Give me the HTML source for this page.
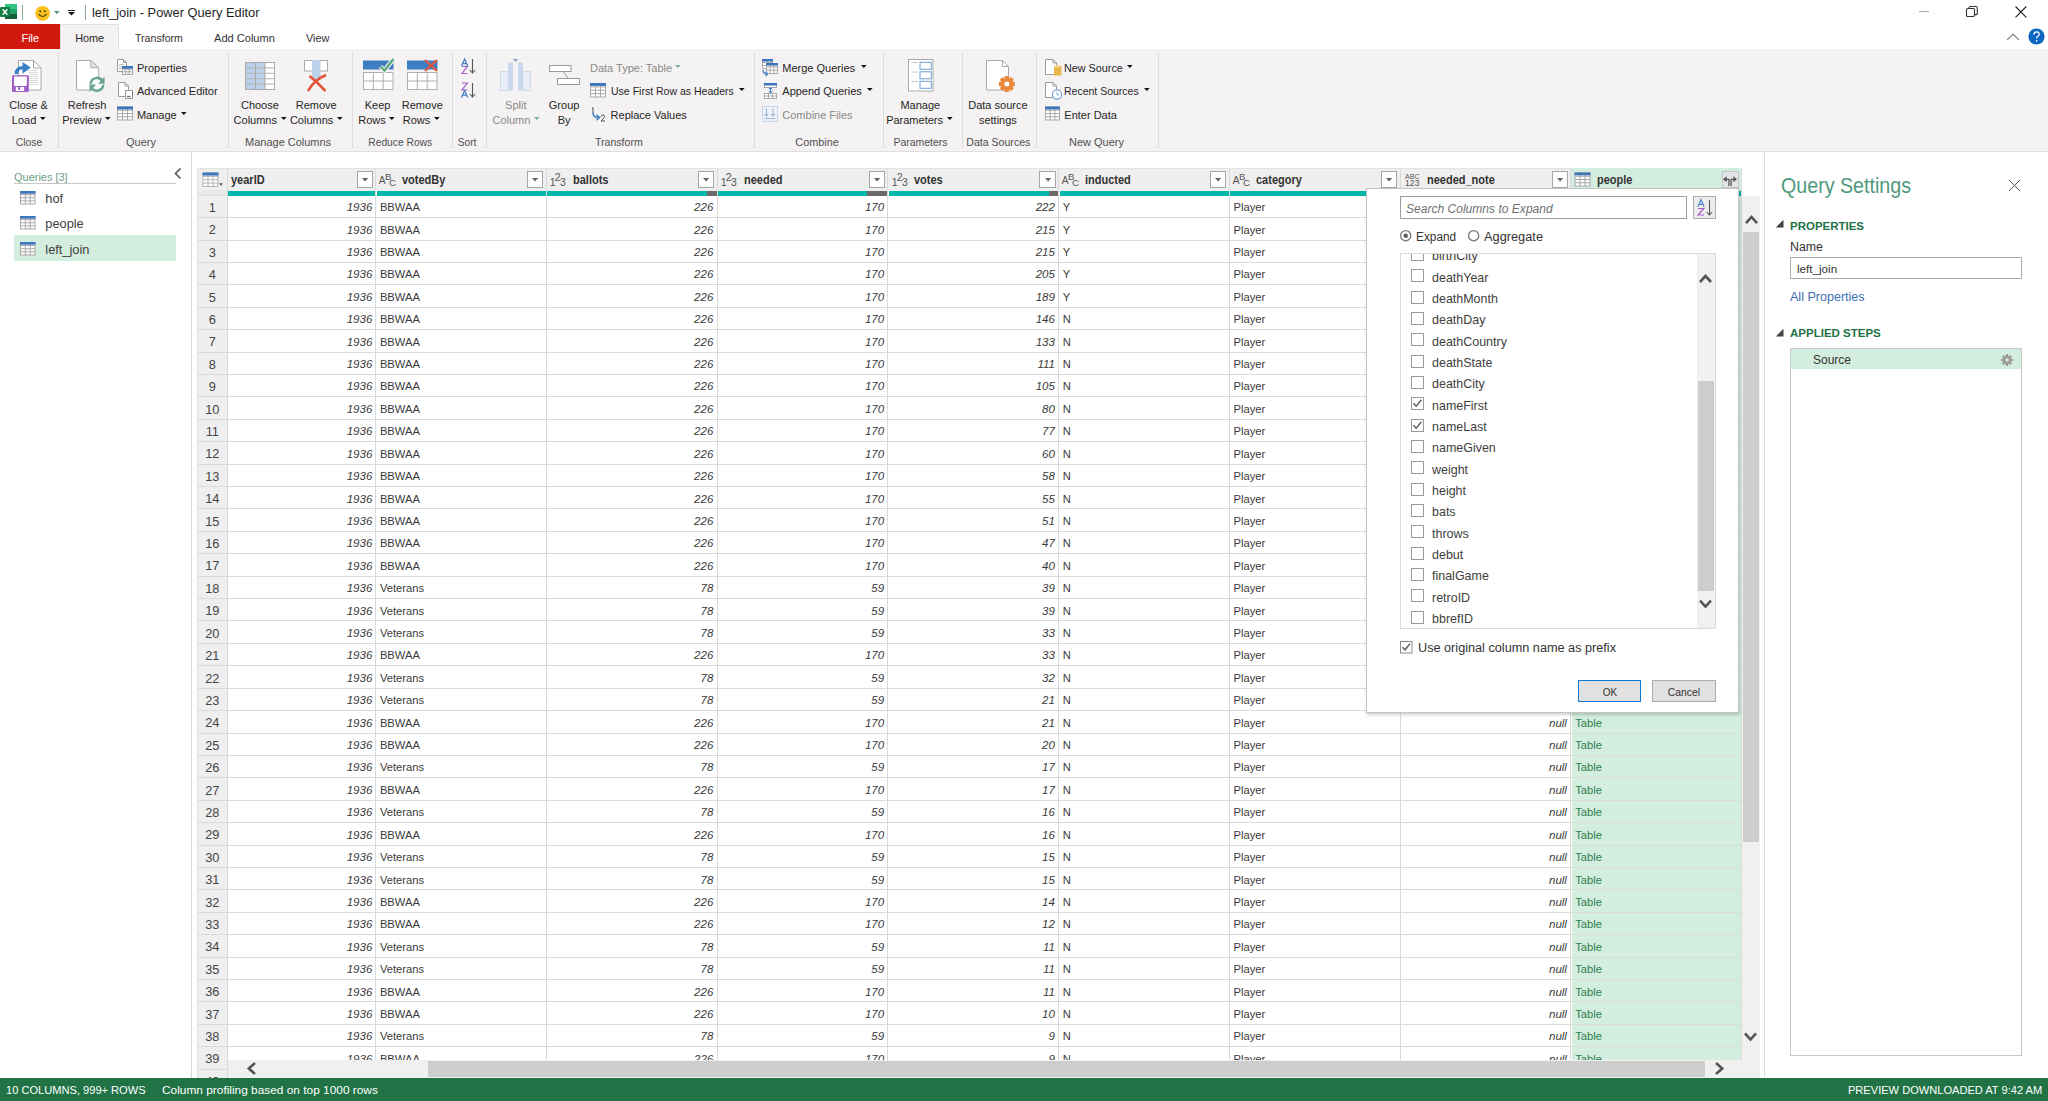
<!DOCTYPE html>
<html><head><meta charset="utf-8"><title>left_join - Power Query Editor</title>
<style>
html,body{margin:0;padding:0;}
body{width:2048px;height:1101px;position:relative;overflow:hidden;background:#fff;font-family:"Liberation Sans",sans-serif;}
.a{position:absolute;display:block;}
.t{position:absolute;white-space:nowrap;display:block;}
svg.a{overflow:visible;}
</style></head><body>
<div class="a" style="left:0.00px;top:0.00px;width:2048.00px;height:24.00px;background:#ffffff;"></div>
<svg class="a" style="left:0.00px;top:3.00px;" width="18" height="17" viewBox="0 0 18 17"><rect x="5" y="1" width="12" height="15" rx="1" fill="#21a366"/><rect x="5" y="1" width="12" height="5" fill="#33c481"/><rect x="5" y="11" width="12" height="5" fill="#185c37"/><rect x="0" y="4" width="10" height="10" rx="1" fill="#107c41"/><path d="M2.6 6.2 L7.4 11.8 M7.4 6.2 L2.6 11.8" stroke="#fff" stroke-width="1.4"/></svg>
<div class="a" style="left:22.00px;top:5.00px;width:1.00px;height:15.00px;background:#8fa89b;"></div>
<svg class="a" style="left:35.00px;top:5.00px;" width="16" height="16" viewBox="0 0 16 16"><circle cx="7.6" cy="8.3" r="7.4" fill="#f9c21b"/><circle cx="5.2" cy="6.3" r="1" fill="#4a3d10"/><circle cx="9.9" cy="6.3" r="1" fill="#4a3d10"/><path d="M3.4 9.2 Q7.6 13.8 11.8 9.2" stroke="#4a3d10" stroke-width="1.1" fill="none"/></svg>
<svg class="a" style="left:53.80px;top:11.30px;" width="5.6" height="3.2" viewBox="0 0 5.6 3.2"><path d="M0 0H5.6 L2.8 3.2 Z" fill="#5d8d76"/></svg>
<div class="a" style="left:67.50px;top:10.00px;width:7.00px;height:1.20px;background:#222;"></div>
<svg class="a" style="left:67.50px;top:12.20px;" width="7" height="3.6" viewBox="0 0 7 3.6"><path d="M0 0H7 L3.5 3.6 Z" fill="#111"/></svg>
<div class="a" style="left:85.00px;top:5.00px;width:1.00px;height:15.00px;background:#8fa89b;"></div>
<span class="t" style="left:91.60px;top:6.00px;font-size:13.00px;line-height:13.00px;color:#1f1f1f;transform:scaleX(0.9865);transform-origin:left center;">left_join - Power Query Editor</span>
<div class="a" style="left:1918.50px;top:11.00px;width:10.50px;height:1.00px;background:#a8a8a8;"></div>
<svg class="a" style="left:1965.00px;top:5.00px;" width="14" height="14" viewBox="0 0 14 14"><rect x="1.5" y="3.5" width="8" height="8" rx="1.2" fill="none" stroke="#333" stroke-width="1.1"/><path d="M4 3.5 V2.6 Q4 1.5 5.2 1.5 H11 Q12.3 1.5 12.3 2.8 V8.6 Q12.3 9.6 11.3 9.6 H9.5" fill="none" stroke="#333" stroke-width="1.1"/></svg>
<svg class="a" style="left:2014.00px;top:5.00px;" width="14" height="14" viewBox="0 0 14 14"><path d="M1.5 1.5 L12.3 12.3 M12.3 1.5 L1.5 12.3" stroke="#222" stroke-width="1.1"/></svg>
<div class="a" style="left:0.00px;top:24.00px;width:2048.00px;height:25.00px;background:#ffffff;"></div>
<div class="a" style="left:0.00px;top:24.00px;width:60.00px;height:24.50px;background:#d2190f;"></div>
<span class="t" style="left:21.44px;top:32.69px;font-size:11.00px;line-height:11.00px;color:#ffffff;">File</span>
<div class="a" style="left:60.00px;top:24.00px;width:58.50px;height:26.00px;background:#f4f2f2;border:1px solid #e1dfdd;border-bottom:none;box-sizing:border-box;"></div>
<span class="t" style="left:74.63px;top:32.69px;font-size:11.00px;line-height:11.00px;color:#262626;transform:scaleX(0.9883);transform-origin:center center;">Home</span>
<span class="t" style="left:135.30px;top:32.69px;font-size:11.00px;line-height:11.00px;color:#333;transform:scaleX(0.9636);transform-origin:left center;">Transform</span>
<span class="t" style="left:214.20px;top:32.69px;font-size:11.00px;line-height:11.00px;color:#333;transform:scaleX(1.0060);transform-origin:left center;">Add Column</span>
<span class="t" style="left:305.60px;top:32.69px;font-size:11.00px;line-height:11.00px;color:#333;transform:scaleX(0.9939);transform-origin:left center;">View</span>
<svg class="a" style="left:2006.00px;top:33.00px;" width="14" height="8" viewBox="0 0 14 8"><path d="M1 7 L7 1.2 L13 7" fill="none" stroke="#8a8a8a" stroke-width="1.2"/></svg>
<svg class="a" style="left:2027.60px;top:28.20px;" width="17" height="17" viewBox="0 0 17 17"><circle cx="8.5" cy="8.5" r="8.1" fill="#0f67c4"/><path d="M6 6.4 Q6 3.8 8.6 3.8 Q11.2 3.8 11.2 6.2 Q11.2 7.6 9.6 8.5 Q8.6 9.1 8.6 10.6" fill="none" stroke="#fff" stroke-width="1.3"/><rect x="7.9" y="12" width="1.4" height="1.5" fill="#fff"/></svg>
<div class="a" style="left:0.00px;top:49.00px;width:2048.00px;height:103.00px;background:#f4f2f2;"></div>
<div class="a" style="left:0.00px;top:151.00px;width:2048.00px;height:1.00px;background:#e1dfdd;"></div>
<div class="a" style="left:58.30px;top:53.00px;width:1.00px;height:95.00px;background:#dedcdb;"></div>
<div class="a" style="left:228.20px;top:53.00px;width:1.00px;height:95.00px;background:#dedcdb;"></div>
<div class="a" style="left:351.80px;top:53.00px;width:1.00px;height:95.00px;background:#dedcdb;"></div>
<div class="a" style="left:452.40px;top:53.00px;width:1.00px;height:95.00px;background:#dedcdb;"></div>
<div class="a" style="left:486.30px;top:53.00px;width:1.00px;height:95.00px;background:#dedcdb;"></div>
<div class="a" style="left:754.30px;top:53.00px;width:1.00px;height:95.00px;background:#dedcdb;"></div>
<div class="a" style="left:883.30px;top:53.00px;width:1.00px;height:95.00px;background:#dedcdb;"></div>
<div class="a" style="left:962.30px;top:53.00px;width:1.00px;height:95.00px;background:#dedcdb;"></div>
<div class="a" style="left:1036.30px;top:53.00px;width:1.00px;height:95.00px;background:#dedcdb;"></div>
<div class="a" style="left:1158.30px;top:53.00px;width:1.00px;height:95.00px;background:#dedcdb;"></div>
<span class="t" style="left:14.54px;top:136.69px;font-size:11.00px;line-height:11.00px;color:#505050;transform:scaleX(0.9387);transform-origin:center center;">Close</span>
<span class="t" style="left:126.32px;top:136.69px;font-size:11.00px;line-height:11.00px;color:#505050;transform:scaleX(0.9948);transform-origin:center center;">Query</span>
<span class="t" style="left:244.89px;top:136.69px;font-size:11.00px;line-height:11.00px;color:#505050;transform:scaleX(0.9975);transform-origin:center center;">Manage Columns</span>
<span class="t" style="left:366.36px;top:136.69px;font-size:11.00px;line-height:11.00px;color:#505050;transform:scaleX(0.9346);transform-origin:center center;">Reduce Rows</span>
<span class="t" style="left:457.21px;top:136.69px;font-size:11.00px;line-height:11.00px;color:#505050;transform:scaleX(0.9269);transform-origin:center center;">Sort</span>
<span class="t" style="left:594.04px;top:136.69px;font-size:11.00px;line-height:11.00px;color:#505050;transform:scaleX(0.9636);transform-origin:center center;">Transform</span>
<span class="t" style="left:795.49px;top:136.69px;font-size:11.00px;line-height:11.00px;color:#505050;transform:scaleX(0.9836);transform-origin:center center;">Combine</span>
<span class="t" style="left:892.37px;top:136.69px;font-size:11.00px;line-height:11.00px;color:#505050;transform:scaleX(0.9498);transform-origin:center center;">Parameters</span>
<span class="t" style="left:964.68px;top:136.69px;font-size:11.00px;line-height:11.00px;color:#505050;transform:scaleX(0.9603);transform-origin:center center;">Data Sources</span>
<span class="t" style="left:1068.69px;top:136.69px;font-size:11.00px;line-height:11.00px;color:#505050;transform:scaleX(0.9997);transform-origin:center center;">New Query</span>
<span class="t" style="left:9.34px;top:99.69px;font-size:11.00px;line-height:11.00px;color:#262626;">Close &amp;</span>
<span class="t" style="left:11.83px;top:114.69px;font-size:11.00px;line-height:11.00px;color:#262626;">Load</span>
<svg class="a" style="left:39.90px;top:117.30px;" width="5.6" height="3.0" viewBox="0 0 5.6 3.0"><path d="M0 0H5.6 L2.8 3.0 Z" fill="#111"/></svg>
<span class="t" style="left:67.74px;top:99.69px;font-size:11.00px;line-height:11.00px;color:#262626;">Refresh</span>
<span class="t" style="left:62.28px;top:114.69px;font-size:11.00px;line-height:11.00px;color:#262626;">Preview</span>
<svg class="a" style="left:105.00px;top:117.30px;" width="5.6" height="3.0" viewBox="0 0 5.6 3.0"><path d="M0 0H5.6 L2.8 3.0 Z" fill="#111"/></svg>
<span class="t" style="left:240.94px;top:99.69px;font-size:11.00px;line-height:11.00px;color:#262626;">Choose</span>
<span class="t" style="left:233.59px;top:114.69px;font-size:11.00px;line-height:11.00px;color:#262626;">Columns</span>
<svg class="a" style="left:280.60px;top:117.30px;" width="5.6" height="3.0" viewBox="0 0 5.6 3.0"><path d="M0 0H5.6 L2.8 3.0 Z" fill="#111"/></svg>
<span class="t" style="left:295.72px;top:99.69px;font-size:11.00px;line-height:11.00px;color:#262626;">Remove</span>
<span class="t" style="left:289.89px;top:114.69px;font-size:11.00px;line-height:11.00px;color:#262626;">Columns</span>
<svg class="a" style="left:336.90px;top:117.30px;" width="5.6" height="3.0" viewBox="0 0 5.6 3.0"><path d="M0 0H5.6 L2.8 3.0 Z" fill="#111"/></svg>
<span class="t" style="left:364.75px;top:99.69px;font-size:11.00px;line-height:11.00px;color:#262626;">Keep</span>
<span class="t" style="left:358.19px;top:114.69px;font-size:11.00px;line-height:11.00px;color:#262626;">Rows</span>
<svg class="a" style="left:389.30px;top:117.30px;" width="5.6" height="3.0" viewBox="0 0 5.6 3.0"><path d="M0 0H5.6 L2.8 3.0 Z" fill="#111"/></svg>
<span class="t" style="left:401.82px;top:99.69px;font-size:11.00px;line-height:11.00px;color:#262626;">Remove</span>
<span class="t" style="left:402.79px;top:114.69px;font-size:11.00px;line-height:11.00px;color:#262626;">Rows</span>
<svg class="a" style="left:433.90px;top:117.30px;" width="5.6" height="3.0" viewBox="0 0 5.6 3.0"><path d="M0 0H5.6 L2.8 3.0 Z" fill="#111"/></svg>
<span class="t" style="left:505.10px;top:99.69px;font-size:11.00px;line-height:11.00px;color:#8a8a8a;">Split</span>
<span class="t" style="left:492.49px;top:114.69px;font-size:11.00px;line-height:11.00px;color:#8a8a8a;">Column</span>
<svg class="a" style="left:534.00px;top:117.30px;" width="5.6" height="3.0" viewBox="0 0 5.6 3.0"><path d="M0 0H5.6 L2.8 3.0 Z" fill="#6fb592"/></svg>
<span class="t" style="left:548.81px;top:99.69px;font-size:11.00px;line-height:11.00px;color:#262626;">Group</span>
<span class="t" style="left:557.68px;top:114.69px;font-size:11.00px;line-height:11.00px;color:#262626;">By</span>
<span class="t" style="left:900.42px;top:99.69px;font-size:11.00px;line-height:11.00px;color:#262626;">Manage</span>
<span class="t" style="left:886.14px;top:114.69px;font-size:11.00px;line-height:11.00px;color:#262626;">Parameters</span>
<svg class="a" style="left:946.60px;top:117.30px;" width="5.6" height="3.0" viewBox="0 0 5.6 3.0"><path d="M0 0H5.6 L2.8 3.0 Z" fill="#111"/></svg>
<span class="t" style="left:968.25px;top:99.69px;font-size:11.00px;line-height:11.00px;color:#262626;">Data source</span>
<span class="t" style="left:978.95px;top:114.69px;font-size:11.00px;line-height:11.00px;color:#262626;">settings</span>
<span class="t" style="left:136.90px;top:62.69px;font-size:11.00px;line-height:11.00px;color:#262626;">Properties</span>
<span class="t" style="left:136.90px;top:85.69px;font-size:11.00px;line-height:11.00px;color:#262626;">Advanced Editor</span>
<span class="t" style="left:136.90px;top:109.69px;font-size:11.00px;line-height:11.00px;color:#262626;">Manage</span>
<svg class="a" style="left:181.00px;top:111.60px;" width="5.6" height="3.0" viewBox="0 0 5.6 3.0"><path d="M0 0H5.6 L2.8 3.0 Z" fill="#111"/></svg>
<span class="t" style="left:590.00px;top:62.69px;font-size:11.00px;line-height:11.00px;color:#8a8a8a;">Data Type: Table</span>
<svg class="a" style="left:675.00px;top:64.70px;" width="5.6" height="3.0" viewBox="0 0 5.6 3.0"><path d="M0 0H5.6 L2.8 3.0 Z" fill="#6fb592"/></svg>
<span class="t" style="left:610.60px;top:85.69px;font-size:11.00px;line-height:11.00px;color:#262626;transform:scaleX(0.9566);transform-origin:left center;">Use First Row as Headers</span>
<svg class="a" style="left:739.00px;top:87.80px;" width="5.6" height="3.0" viewBox="0 0 5.6 3.0"><path d="M0 0H5.6 L2.8 3.0 Z" fill="#111"/></svg>
<span class="t" style="left:610.60px;top:109.69px;font-size:11.00px;line-height:11.00px;color:#262626;">Replace Values</span>
<span class="t" style="left:782.30px;top:62.69px;font-size:11.00px;line-height:11.00px;color:#262626;">Merge Queries</span>
<svg class="a" style="left:860.50px;top:64.70px;" width="5.6" height="3.0" viewBox="0 0 5.6 3.0"><path d="M0 0H5.6 L2.8 3.0 Z" fill="#111"/></svg>
<span class="t" style="left:782.30px;top:85.69px;font-size:11.00px;line-height:11.00px;color:#262626;">Append Queries</span>
<svg class="a" style="left:867.20px;top:87.80px;" width="5.6" height="3.0" viewBox="0 0 5.6 3.0"><path d="M0 0H5.6 L2.8 3.0 Z" fill="#111"/></svg>
<span class="t" style="left:782.30px;top:109.69px;font-size:11.00px;line-height:11.00px;color:#8a8a8a;">Combine Files</span>
<span class="t" style="left:1064.30px;top:62.69px;font-size:11.00px;line-height:11.00px;color:#262626;transform:scaleX(0.9814);transform-origin:left center;">New Source</span>
<svg class="a" style="left:1127.00px;top:64.70px;" width="5.6" height="3.0" viewBox="0 0 5.6 3.0"><path d="M0 0H5.6 L2.8 3.0 Z" fill="#111"/></svg>
<span class="t" style="left:1064.30px;top:85.69px;font-size:11.00px;line-height:11.00px;color:#262626;transform:scaleX(0.9545);transform-origin:left center;">Recent Sources</span>
<svg class="a" style="left:1143.50px;top:87.80px;" width="5.6" height="3.0" viewBox="0 0 5.6 3.0"><path d="M0 0H5.6 L2.8 3.0 Z" fill="#111"/></svg>
<span class="t" style="left:1064.30px;top:109.69px;font-size:11.00px;line-height:11.00px;color:#262626;">Enter Data</span>
<svg class="a" style="left:11.00px;top:58.00px;" width="32" height="36" viewBox="0 0 32 36"><path d="M7.5 2.5 H22.5 L30.0 10.0 V32.0 H7.5 Z" fill="#fff" stroke="#a8a8a8" stroke-width="1"/><path d="M22.5 2.5 V10.0 H30.0" fill="none" stroke="#a8a8a8" stroke-width="1"/><path d="M17.5 12.5 H27" stroke="#dadada" stroke-width="1"/><path d="M17.5 14.5 H27" stroke="#dadada" stroke-width="1"/><path d="M17.5 16.5 H27" stroke="#dadada" stroke-width="1"/><path d="M17.5 18.5 H27" stroke="#dadada" stroke-width="1"/><path d="M17.5 20.5 H27" stroke="#dadada" stroke-width="1"/><path d="M17.5 22.5 H27" stroke="#dadada" stroke-width="1"/><path d="M17.5 24.5 H27" stroke="#dadada" stroke-width="1"/><path d="M17.5 26.5 H27" stroke="#dadada" stroke-width="1"/><path d="M5.3 16 Q5.3 9.6 12.5 9.6" fill="none" stroke="#3b7fc4" stroke-width="3.4"/><path d="M11.5 4 L19.8 9.6 L11.5 15.7 Z" fill="#3b7fc4"/><rect x="1" y="17.2" width="16.8" height="16.8" rx="1.2" fill="#9b5ec6"/><rect x="3" y="18.4" width="12.8" height="9.6" rx="0.8" fill="#fff"/><rect x="4.8" y="29" width="8.4" height="4" fill="#fff"/><rect x="7.2" y="29" width="2" height="3" fill="#9b5ec6"/></svg>
<svg class="a" style="left:74.00px;top:58.00px;" width="32" height="36" viewBox="0 0 32 36"><path d="M2.5 2.5 H16.7 L24.7 10 V32 H2.5 Z" fill="#fff" stroke="#a8a8a8" stroke-width="1"/><path d="M16.7 2.5 V9.7 H24.7 Z" fill="#e4e4e4" stroke="#b0b0b0" stroke-width="1"/><circle cx="23" cy="26.2" r="7.6" fill="#fff"/><path d="M16.8 26.2 A6.2 6.2 0 0 1 28.4 23.1" fill="none" stroke="#6aa78e" stroke-width="2.5"/><path d="M30.6 18.5 V25.8 H24 Z" fill="#6aa78e"/><path d="M29.2 26.6 A6.2 6.2 0 0 1 17.6 29.5" fill="none" stroke="#6aa78e" stroke-width="2.5"/><path d="M15.5 34 V26.6 H22.2 Z" fill="#6aa78e"/></svg>
<svg class="a" style="left:116.00px;top:58.00px;" width="18" height="18" viewBox="0 0 18 18"><path d="M1.5 1.5 H7.5 L10.5 4.5 V13.5 H1.5 Z" fill="#fff" stroke="#9a9a9a" stroke-width="1"/><path d="M7.5 1.5 V4.5 H10.5" fill="none" stroke="#9a9a9a" stroke-width="1"/><path d="M3 6.5 H8" stroke="#bbb"/><path d="M3 8.5 H8" stroke="#bbb"/><path d="M3 10.5 H8" stroke="#bbb"/><rect x="6.5" y="8.5" width="10" height="8" fill="#fff" stroke="#a9a9a9" stroke-width="1"/><path d="M9.83 8.5 V16.5" stroke="#a9a9a9" stroke-width="1"/><path d="M13.17 8.5 V16.5" stroke="#a9a9a9" stroke-width="1"/><path d="M6.5 11.17 H16.5" stroke="#a9a9a9" stroke-width="1"/><path d="M6.5 13.83 H16.5" stroke="#a9a9a9" stroke-width="1"/><rect x="6.0" y="8.0" width="11" height="2.7" fill="#3d76bd"/></svg>
<svg class="a" style="left:117.00px;top:81.00px;" width="18" height="19" viewBox="0 0 18 19"><path d="M1.5 1.5 H8.0 L11.5 5.0 V15.5 H1.5 Z" fill="#fff" stroke="#9a9a9a" stroke-width="1"/><path d="M8.0 1.5 V5.0 H11.5" fill="none" stroke="#9a9a9a" stroke-width="1"/><rect x="8.5" y="9.5" width="7" height="8" fill="#fff" stroke="#9a9a9a"/><path d="M10 15.5 H13.5" stroke="#666" stroke-width="1.2"/><path d="M15.5 11 V14" stroke="#666"/></svg>
<svg class="a" style="left:116.00px;top:105.00px;" width="18" height="17" viewBox="0 0 18 17"><rect x="1.5" y="2" width="15" height="13" fill="#fff" stroke="#a9a9a9" stroke-width="1"/><path d="M6.50 2 V15" stroke="#a9a9a9" stroke-width="1"/><path d="M11.50 2 V15" stroke="#a9a9a9" stroke-width="1"/><path d="M1.5 5.25 H16.5" stroke="#a9a9a9" stroke-width="1"/><path d="M1.5 8.50 H16.5" stroke="#a9a9a9" stroke-width="1"/><path d="M1.5 11.75 H16.5" stroke="#a9a9a9" stroke-width="1"/><rect x="1.0" y="1.5" width="16" height="2.9" fill="#3d76bd"/></svg>
<svg class="a" style="left:244.00px;top:61.00px;" width="32" height="30" viewBox="0 0 32 30"><rect x="1.5" y="1.5" width="29" height="27" fill="#fff" stroke="#a9a9a9"/><rect x="2" y="2" width="19" height="26" fill="#bcd2ea"/><path d="M11.5 1.5 V28.5" stroke="#a9a9a9"/><path d="M21 1.5 V28.5" stroke="#a9a9a9"/><path d="M1.5 6.9 H30.5" stroke="#b3b3b3"/><path d="M1.5 12.3 H30.5" stroke="#b3b3b3"/><path d="M1.5 17.7 H30.5" stroke="#b3b3b3"/><path d="M1.5 23.1 H30.5" stroke="#b3b3b3"/></svg>
<svg class="a" style="left:302.00px;top:58.00px;" width="30" height="36" viewBox="0 0 30 36"><rect x="2.5" y="2.5" width="23" height="10.5" fill="#fff" stroke="#a9a9a9"/><rect x="10" y="2" width="8.5" height="20" fill="#bcd2ea"/><path d="M6 33 Q12 22 24 17" fill="none" stroke="#e2553a" stroke-width="2.6"/><path d="M7.5 18 Q15 24 23.5 33" fill="none" stroke="#e2553a" stroke-width="2.6"/></svg>
<svg class="a" style="left:362.00px;top:57.00px;" width="34" height="34" viewBox="0 0 34 34"><rect x="1" y="3.5" width="30.5" height="9" fill="#3f7dc1"/><rect x="1.5" y="15.5" width="29.5" height="17" fill="#fff" stroke="#b0b0b0" stroke-width="1"/><path d="M11.33 15.5 V32.5" stroke="#b0b0b0" stroke-width="1"/><path d="M21.17 15.5 V32.5" stroke="#b0b0b0" stroke-width="1"/><path d="M1.5 24.00 H31.0" stroke="#b0b0b0" stroke-width="1"/><path d="M18.5 9.5 L22.5 13.5 L31.5 2" fill="none" stroke="#f4f2f2" stroke-width="4.5"/><path d="M18.5 9.5 L22.5 13.5 L31.5 2" fill="none" stroke="#5aa77f" stroke-width="2.4"/></svg>
<svg class="a" style="left:406.00px;top:57.00px;" width="34" height="34" viewBox="0 0 34 34"><rect x="1" y="3.5" width="30.5" height="9" fill="#3f7dc1"/><rect x="1.5" y="15.5" width="29.5" height="17" fill="#fff" stroke="#b0b0b0" stroke-width="1"/><path d="M11.33 15.5 V32.5" stroke="#b0b0b0" stroke-width="1"/><path d="M21.17 15.5 V32.5" stroke="#b0b0b0" stroke-width="1"/><path d="M1.5 24.00 H31.0" stroke="#b0b0b0" stroke-width="1"/><path d="M19 3 L31 14 M31 3 L19 14" fill="none" stroke="#e2553a" stroke-width="2.2"/></svg>
<svg class="a" style="left:460.00px;top:58.00px;" width="17" height="17" viewBox="0 0 17 17"><path d="M1.5 8 L4.6 1 L7.7 8 M2.6 5.7 H6.6" fill="none" stroke="#3f7dc1" stroke-width="1.2"/><path d="M2 8.5 H7.3 L2 15.5 H7.5" fill="none" stroke="#a35dc9" stroke-width="1.2"/><path d="M12.5 1 V15 M9.8 12 L12.5 15 L15.2 12" fill="none" stroke="#555" stroke-width="1.1"/></svg>
<svg class="a" style="left:460.00px;top:81.50px;" width="17" height="17" viewBox="0 0 17 17"><path d="M2 1 H7.3 L2 8 H7.5" fill="none" stroke="#a35dc9" stroke-width="1.2"/><path d="M1.5 15.5 L4.6 8.5 L7.7 15.5 M2.6 13.2 H6.6" fill="none" stroke="#3f7dc1" stroke-width="1.2"/><path d="M12.5 1 V15 M9.8 12 L12.5 15 L15.2 12" fill="none" stroke="#555" stroke-width="1.1"/></svg>
<svg class="a" style="left:499.00px;top:58.00px;" width="34" height="34" viewBox="0 0 34 34"><rect x="1.5" y="13.5" width="8" height="19" fill="#e8eef7" stroke="#cfdbea"/><rect x="23.5" y="13.5" width="8" height="19" fill="#e8eef7" stroke="#cfdbea"/><rect x="9" y="4.5" width="5" height="28" fill="#c9d8ec"/><rect x="19" y="4.5" width="5" height="28" fill="#c9d8ec"/><path d="M13.8 1 H19.2 L16.5 4 Z" fill="#8fa6c6"/></svg>
<svg class="a" style="left:548.00px;top:64.00px;" width="34" height="23" viewBox="0 0 34 23"><rect x="1.5" y="1.5" width="21.5" height="6" fill="#fff" stroke="#999"/><rect x="9.5" y="14.5" width="22" height="6" fill="#fff" stroke="#999"/><path d="M15 7.5 L20.5 14.5" stroke="#999"/></svg>
<svg class="a" style="left:589.00px;top:82.00px;" width="18" height="17" viewBox="0 0 18 17"><rect x="1.5" y="1.5" width="15" height="13.5" fill="#fff" stroke="#a9a9a9" stroke-width="1"/><path d="M6.50 1.5 V15.0" stroke="#a9a9a9" stroke-width="1"/><path d="M11.50 1.5 V15.0" stroke="#a9a9a9" stroke-width="1"/><path d="M1.5 4.88 H16.5" stroke="#a9a9a9" stroke-width="1"/><path d="M1.5 8.25 H16.5" stroke="#a9a9a9" stroke-width="1"/><path d="M1.5 11.62 H16.5" stroke="#a9a9a9" stroke-width="1"/><rect x="1.0" y="1.0" width="16" height="2.9" fill="#3d76bd"/></svg>
<svg class="a" style="left:589.00px;top:106.00px;" width="18" height="17" viewBox="0 0 18 17"><path d="M2.8 2.6 L4 1.6 V7" fill="none" stroke="#444" stroke-width="0.9"/><path d="M4 6.5 Q4 11.5 9 11.5" fill="none" stroke="#3f7dc1" stroke-width="1.5"/><path d="M7.5 8.8 L10.5 11.5 L7.5 14.2" fill="none" stroke="#3f7dc1" stroke-width="1.5"/><path d="M12 10.5 Q12.5 9 14 9 Q15.6 9 15.6 10.6 Q15.6 11.8 12 15 H16" fill="none" stroke="#444" stroke-width="0.9"/></svg>
<svg class="a" style="left:761.00px;top:58.00px;" width="18" height="19" viewBox="0 0 18 19"><rect x="1.5" y="1.5" width="10" height="9" fill="#fff" stroke="#a9a9a9" stroke-width="1"/><path d="M6.50 1.5 V10.5" stroke="#a9a9a9" stroke-width="1"/><path d="M1.5 4.50 H11.5" stroke="#a9a9a9" stroke-width="1"/><path d="M1.5 7.50 H11.5" stroke="#a9a9a9" stroke-width="1"/><rect x="1.0" y="1.0" width="11" height="2.5" fill="#3d76bd"/><rect x="5.5" y="5.5" width="11" height="10" fill="#fff" stroke="#a9a9a9" stroke-width="1"/><path d="M9.17 5.5 V15.5" stroke="#a9a9a9" stroke-width="1"/><path d="M12.83 5.5 V15.5" stroke="#a9a9a9" stroke-width="1"/><path d="M5.5 8.83 H16.5" stroke="#a9a9a9" stroke-width="1"/><path d="M5.5 12.17 H16.5" stroke="#a9a9a9" stroke-width="1"/><rect x="5.0" y="5.0" width="12" height="2.5" fill="#3d76bd"/><path d="M2 12 Q2 16 6 16" fill="none" stroke="#3f7dc1" stroke-width="1.3"/><path d="M4.5 14 L6.8 16 L4.5 18" fill="none" stroke="#3f7dc1" stroke-width="1.2"/></svg>
<svg class="a" style="left:763.00px;top:82.00px;" width="15" height="17" viewBox="0 0 15 17"><rect x="1.5" y="1.5" width="12" height="4" fill="#fff" stroke="#a9a9a9" stroke-width="1"/><rect x="1.0" y="1.0" width="13" height="2.5" fill="#3d76bd"/><rect x="1.5" y="11.5" width="12" height="5" fill="#fff" stroke="#a9a9a9" stroke-width="1"/><path d="M5.50 11.5 V16.5" stroke="#a9a9a9" stroke-width="1"/><path d="M9.50 11.5 V16.5" stroke="#a9a9a9" stroke-width="1"/><path d="M1.5 14.00 H13.5" stroke="#a9a9a9" stroke-width="1"/><path d="M7.5 5.5 V11 M5.8 9.2 L7.5 11 L9.2 9.2 M5.8 7.2 L7.5 5.5 L9.2 7.2" fill="none" stroke="#3f7dc1" stroke-width="1"/></svg>
<svg class="a" style="left:761.00px;top:105.00px;" width="18" height="18" viewBox="0 0 18 18"><rect x="1.5" y="1.5" width="15" height="15" fill="#eef3fa" stroke="#c5d5ea"/><path d="M5.5 3.5 V11 M3.5 9 L5.5 11 L7.5 9 M12 3.5 V11 M10 9 L12 11 L14 9 M3.5 13.5 H14.5" fill="none" stroke="#9fb8d8" stroke-width="1.1"/></svg>
<svg class="a" style="left:907.00px;top:58.00px;" width="28" height="35" viewBox="0 0 28 35"><rect x="1.5" y="1.5" width="24.5" height="31.5" fill="#fff" stroke="#a9a9a9"/><rect x="13" y="4.3" width="11.3" height="7" fill="none" stroke="#6f9fd8" stroke-width="1"/><path d="M4.3 4.5 H11" stroke="#c8c8c8"/><rect x="13" y="13.8" width="11.3" height="7" fill="none" stroke="#6f9fd8" stroke-width="1"/><path d="M4.3 14 H11" stroke="#c8c8c8"/><rect x="13" y="23.3" width="11.3" height="7" fill="none" stroke="#6f9fd8" stroke-width="1"/><path d="M4.3 23.5 H11" stroke="#c8c8c8"/></svg>
<svg class="a" style="left:984.00px;top:58.00px;" width="34" height="36" viewBox="0 0 34 36"><path d="M2.5 2.5 H18.5 L24.5 8.5 V32.0 H2.5 Z" fill="#fff" stroke="#a8a8a8" stroke-width="1"/><path d="M18.5 2.5 V8.5 H24.5" fill="none" stroke="#a8a8a8" stroke-width="1"/><rect x="-2.2" y="-8" width="4.4" height="4" rx="0.6" transform="translate(22.9 26) rotate(0)" fill="#e9883a"/><rect x="-2.2" y="-8" width="4.4" height="4" rx="0.6" transform="translate(22.9 26) rotate(45)" fill="#e9883a"/><rect x="-2.2" y="-8" width="4.4" height="4" rx="0.6" transform="translate(22.9 26) rotate(90)" fill="#e9883a"/><rect x="-2.2" y="-8" width="4.4" height="4" rx="0.6" transform="translate(22.9 26) rotate(135)" fill="#e9883a"/><rect x="-2.2" y="-8" width="4.4" height="4" rx="0.6" transform="translate(22.9 26) rotate(180)" fill="#e9883a"/><rect x="-2.2" y="-8" width="4.4" height="4" rx="0.6" transform="translate(22.9 26) rotate(225)" fill="#e9883a"/><rect x="-2.2" y="-8" width="4.4" height="4" rx="0.6" transform="translate(22.9 26) rotate(270)" fill="#e9883a"/><rect x="-2.2" y="-8" width="4.4" height="4" rx="0.6" transform="translate(22.9 26) rotate(315)" fill="#e9883a"/><circle cx="22.9" cy="26" r="5.8" fill="#e9883a"/><circle cx="22.9" cy="26" r="2.5" fill="#fff"/></svg>
<svg class="a" style="left:1044.00px;top:58.00px;" width="19" height="19" viewBox="0 0 19 19"><path d="M1.5 1.5 H9.0 L12.5 5.0 V16.5 H1.5 Z" fill="#fff" stroke="#9a9a9a" stroke-width="1"/><path d="M9.0 1.5 V5.0 H12.5" fill="none" stroke="#9a9a9a" stroke-width="1"/><rect x="10" y="8.5" width="7.5" height="9" fill="#e8b548"/><ellipse cx="13.75" cy="8.6" rx="3.75" ry="1.3" fill="#f2cf7d"/></svg>
<svg class="a" style="left:1044.00px;top:81.00px;" width="19" height="19" viewBox="0 0 19 19"><path d="M1.5 1.5 H9.0 L12.5 5.0 V16.5 H1.5 Z" fill="#fff" stroke="#9a9a9a" stroke-width="1"/><path d="M9.0 1.5 V5.0 H12.5" fill="none" stroke="#9a9a9a" stroke-width="1"/><circle cx="13" cy="13.5" r="4.6" fill="#fff" stroke="#6d9fdb" stroke-width="1.1"/><path d="M13 11 V13.7 H15" fill="none" stroke="#6d9fdb" stroke-width="0.9"/></svg>
<svg class="a" style="left:1044.00px;top:105.00px;" width="17" height="17" viewBox="0 0 17 17"><rect x="1.5" y="2" width="14" height="13" fill="#fff" stroke="#a9a9a9" stroke-width="1"/><path d="M6.17 2 V15" stroke="#a9a9a9" stroke-width="1"/><path d="M10.83 2 V15" stroke="#a9a9a9" stroke-width="1"/><path d="M1.5 5.25 H15.5" stroke="#a9a9a9" stroke-width="1"/><path d="M1.5 8.50 H15.5" stroke="#a9a9a9" stroke-width="1"/><path d="M1.5 11.75 H15.5" stroke="#a9a9a9" stroke-width="1"/><rect x="1.0" y="1.5" width="15" height="2.9" fill="#3d76bd"/></svg>
<div class="a" style="left:191.00px;top:152.00px;width:1.00px;height:926.00px;background:#d9d9d9;"></div>
<span class="t" style="left:13.70px;top:172.35px;font-size:11.40px;line-height:11.40px;color:#6b9e83;transform:scaleX(0.9631);transform-origin:left center;">Queries [3]</span>
<div class="a" style="left:13.70px;top:183.00px;width:162.00px;height:1.00px;background:#c8c8c8;"></div>
<svg class="a" style="left:173.00px;top:167.00px;" width="10" height="13" viewBox="0 0 10 13"><path d="M7.5 1.5 L2.5 6.5 L7.5 11.5" fill="none" stroke="#555" stroke-width="1.6"/></svg>
<div class="a" style="left:13.70px;top:235.40px;width:162.00px;height:25.30px;background:#d3eddf;"></div>
<svg class="a" style="left:19.00px;top:189.90px;" width="17" height="15" viewBox="0 0 17 15"><rect x="1.5" y="1.5" width="14.5" height="12.5" fill="#fff" stroke="#a9a9a9" stroke-width="1"/><path d="M6.33 1.5 V14.0" stroke="#a9a9a9" stroke-width="1"/><path d="M11.17 1.5 V14.0" stroke="#a9a9a9" stroke-width="1"/><path d="M1.5 4.62 H16.0" stroke="#a9a9a9" stroke-width="1"/><path d="M1.5 7.75 H16.0" stroke="#a9a9a9" stroke-width="1"/><path d="M1.5 10.88 H16.0" stroke="#a9a9a9" stroke-width="1"/><rect x="1.0" y="1.0" width="15.5" height="2.7" fill="#3d76bd"/></svg>
<span class="t" style="left:45.30px;top:193.16px;font-size:12.80px;line-height:12.80px;color:#404040;">hof</span>
<svg class="a" style="left:19.00px;top:215.40px;" width="17" height="15" viewBox="0 0 17 15"><rect x="1.5" y="1.5" width="14.5" height="12.5" fill="#fff" stroke="#a9a9a9" stroke-width="1"/><path d="M6.33 1.5 V14.0" stroke="#a9a9a9" stroke-width="1"/><path d="M11.17 1.5 V14.0" stroke="#a9a9a9" stroke-width="1"/><path d="M1.5 4.62 H16.0" stroke="#a9a9a9" stroke-width="1"/><path d="M1.5 7.75 H16.0" stroke="#a9a9a9" stroke-width="1"/><path d="M1.5 10.88 H16.0" stroke="#a9a9a9" stroke-width="1"/><rect x="1.0" y="1.0" width="15.5" height="2.7" fill="#3d76bd"/></svg>
<span class="t" style="left:45.30px;top:218.16px;font-size:12.80px;line-height:12.80px;color:#404040;">people</span>
<svg class="a" style="left:19.00px;top:240.70px;" width="17" height="15" viewBox="0 0 17 15"><rect x="1.5" y="1.5" width="14.5" height="12.5" fill="#fff" stroke="#a9a9a9" stroke-width="1"/><path d="M6.33 1.5 V14.0" stroke="#a9a9a9" stroke-width="1"/><path d="M11.17 1.5 V14.0" stroke="#a9a9a9" stroke-width="1"/><path d="M1.5 4.62 H16.0" stroke="#a9a9a9" stroke-width="1"/><path d="M1.5 7.75 H16.0" stroke="#a9a9a9" stroke-width="1"/><path d="M1.5 10.88 H16.0" stroke="#a9a9a9" stroke-width="1"/><rect x="1.0" y="1.0" width="15.5" height="2.7" fill="#3d76bd"/></svg>
<span class="t" style="left:45.30px;top:244.16px;font-size:12.80px;line-height:12.80px;color:#404040;">left_join</span>
<div class="a" style="left:197.00px;top:168.00px;width:1545.00px;height:23.00px;background:#efefef;"></div>
<div class="a" style="left:197.00px;top:168.00px;width:1545.00px;height:1.00px;background:#e2e2e2;"></div>
<div class="a" style="left:1570.90px;top:168.00px;width:170.90px;height:28.00px;background:#d3eddf;"></div>
<div class="a" style="left:197.00px;top:190.00px;width:30.40px;height:888.00px;background:#efefef;"></div>
<div class="a" style="left:197.00px;top:190.00px;width:30.40px;height:6.00px;background:#e9e9e9;"></div>
<div class="a" style="left:197.00px;top:195.00px;width:30.40px;height:1.00px;background:#dedede;"></div>
<div class="a" style="left:1571.90px;top:196.00px;width:169.90px;height:864.00px;background:#d3eddf;"></div>
<div class="a" style="left:228.40px;top:191.00px;width:147.50px;height:4.80px;background:#01b8aa;"></div>
<div class="a" style="left:376.90px;top:191.00px;width:169.40px;height:4.80px;background:#01b8aa;"></div>
<div class="a" style="left:547.30px;top:191.00px;width:169.80px;height:4.80px;background:#01b8aa;"></div>
<div class="a" style="left:707.10px;top:191.00px;width:10.00px;height:4.80px;background:#6a6a6a;"></div>
<div class="a" style="left:718.10px;top:191.00px;width:169.80px;height:4.80px;background:#01b8aa;"></div>
<div class="a" style="left:866.90px;top:191.00px;width:21.00px;height:4.80px;background:#6a6a6a;"></div>
<div class="a" style="left:888.90px;top:191.00px;width:169.80px;height:4.80px;background:#01b8aa;"></div>
<div class="a" style="left:1048.70px;top:191.00px;width:10.00px;height:4.80px;background:#6a6a6a;"></div>
<div class="a" style="left:1059.70px;top:191.00px;width:169.60px;height:4.80px;background:#01b8aa;"></div>
<div class="a" style="left:1230.30px;top:191.00px;width:169.80px;height:4.80px;background:#01b8aa;"></div>
<div class="a" style="left:1401.10px;top:191.00px;width:169.80px;height:4.80px;background:#01b8aa;"></div>
<div class="a" style="left:1571.90px;top:191.00px;width:169.90px;height:4.80px;background:#01b8aa;"></div>
<div class="a" style="left:197.00px;top:217.00px;width:1545.00px;height:1.00px;background:#dadada;"></div>
<div class="a" style="left:197.00px;top:240.00px;width:1545.00px;height:1.00px;background:#dadada;"></div>
<div class="a" style="left:197.00px;top:262.00px;width:1545.00px;height:1.00px;background:#dadada;"></div>
<div class="a" style="left:197.00px;top:284.00px;width:1545.00px;height:1.00px;background:#dadada;"></div>
<div class="a" style="left:197.00px;top:307.00px;width:1545.00px;height:1.00px;background:#dadada;"></div>
<div class="a" style="left:197.00px;top:329.00px;width:1545.00px;height:1.00px;background:#dadada;"></div>
<div class="a" style="left:197.00px;top:352.00px;width:1545.00px;height:1.00px;background:#dadada;"></div>
<div class="a" style="left:197.00px;top:374.00px;width:1545.00px;height:1.00px;background:#dadada;"></div>
<div class="a" style="left:197.00px;top:396.00px;width:1545.00px;height:1.00px;background:#dadada;"></div>
<div class="a" style="left:197.00px;top:419.00px;width:1545.00px;height:1.00px;background:#dadada;"></div>
<div class="a" style="left:197.00px;top:441.00px;width:1545.00px;height:1.00px;background:#dadada;"></div>
<div class="a" style="left:197.00px;top:464.00px;width:1545.00px;height:1.00px;background:#dadada;"></div>
<div class="a" style="left:197.00px;top:486.00px;width:1545.00px;height:1.00px;background:#dadada;"></div>
<div class="a" style="left:197.00px;top:508.00px;width:1545.00px;height:1.00px;background:#dadada;"></div>
<div class="a" style="left:197.00px;top:531.00px;width:1545.00px;height:1.00px;background:#dadada;"></div>
<div class="a" style="left:197.00px;top:553.00px;width:1545.00px;height:1.00px;background:#dadada;"></div>
<div class="a" style="left:197.00px;top:576.00px;width:1545.00px;height:1.00px;background:#dadada;"></div>
<div class="a" style="left:197.00px;top:598.00px;width:1545.00px;height:1.00px;background:#dadada;"></div>
<div class="a" style="left:197.00px;top:620.00px;width:1545.00px;height:1.00px;background:#dadada;"></div>
<div class="a" style="left:197.00px;top:643.00px;width:1545.00px;height:1.00px;background:#dadada;"></div>
<div class="a" style="left:197.00px;top:665.00px;width:1545.00px;height:1.00px;background:#dadada;"></div>
<div class="a" style="left:197.00px;top:688.00px;width:1545.00px;height:1.00px;background:#dadada;"></div>
<div class="a" style="left:197.00px;top:710.00px;width:1545.00px;height:1.00px;background:#dadada;"></div>
<div class="a" style="left:197.00px;top:733.00px;width:1545.00px;height:1.00px;background:#dadada;"></div>
<div class="a" style="left:197.00px;top:755.00px;width:1545.00px;height:1.00px;background:#dadada;"></div>
<div class="a" style="left:197.00px;top:777.00px;width:1545.00px;height:1.00px;background:#dadada;"></div>
<div class="a" style="left:197.00px;top:800.00px;width:1545.00px;height:1.00px;background:#dadada;"></div>
<div class="a" style="left:197.00px;top:822.00px;width:1545.00px;height:1.00px;background:#dadada;"></div>
<div class="a" style="left:197.00px;top:845.00px;width:1545.00px;height:1.00px;background:#dadada;"></div>
<div class="a" style="left:197.00px;top:867.00px;width:1545.00px;height:1.00px;background:#dadada;"></div>
<div class="a" style="left:197.00px;top:889.00px;width:1545.00px;height:1.00px;background:#dadada;"></div>
<div class="a" style="left:197.00px;top:912.00px;width:1545.00px;height:1.00px;background:#dadada;"></div>
<div class="a" style="left:197.00px;top:934.00px;width:1545.00px;height:1.00px;background:#dadada;"></div>
<div class="a" style="left:197.00px;top:957.00px;width:1545.00px;height:1.00px;background:#dadada;"></div>
<div class="a" style="left:197.00px;top:979.00px;width:1545.00px;height:1.00px;background:#dadada;"></div>
<div class="a" style="left:197.00px;top:1001.00px;width:1545.00px;height:1.00px;background:#dadada;"></div>
<div class="a" style="left:197.00px;top:1024.00px;width:1545.00px;height:1.00px;background:#dadada;"></div>
<div class="a" style="left:197.00px;top:1046.00px;width:1545.00px;height:1.00px;background:#dadada;"></div>
<div class="a" style="left:197.00px;top:1069.00px;width:30.40px;height:1.00px;background:#dadada;"></div>
<div class="a" style="left:226.90px;top:169.00px;width:1.00px;height:909.00px;background:#dadada;"></div>
<div class="a" style="left:375.40px;top:169.00px;width:1.00px;height:891.00px;background:#dadada;"></div>
<div class="a" style="left:545.80px;top:169.00px;width:1.00px;height:891.00px;background:#dadada;"></div>
<div class="a" style="left:716.60px;top:169.00px;width:1.00px;height:891.00px;background:#dadada;"></div>
<div class="a" style="left:887.40px;top:169.00px;width:1.00px;height:891.00px;background:#dadada;"></div>
<div class="a" style="left:1058.20px;top:169.00px;width:1.00px;height:891.00px;background:#dadada;"></div>
<div class="a" style="left:1228.80px;top:169.00px;width:1.00px;height:891.00px;background:#dadada;"></div>
<div class="a" style="left:1399.60px;top:169.00px;width:1.00px;height:891.00px;background:#dadada;"></div>
<div class="a" style="left:1570.40px;top:169.00px;width:1.00px;height:891.00px;background:#dadada;"></div>
<div class="a" style="left:1741.30px;top:169.00px;width:1.00px;height:891.00px;background:#dadada;"></div>
<div class="a" style="left:197.00px;top:168.00px;width:1.00px;height:910.00px;background:#e0e0e0;"></div>
<span class="t" style="left:231.40px;top:173.59px;font-size:12.30px;line-height:12.30px;color:#333;font-weight:700;transform:scaleX(0.8943);transform-origin:left center;">yearID</span>
<div class="a" style="left:356.60px;top:171.30px;width:16.40px;height:16.40px;background:#ffffff;border:1px solid #a6a6a6;box-sizing:border-box;"></div>
<svg class="a" style="left:361.70px;top:178.00px;" width="6.2" height="3.4" viewBox="0 0 6.2 3.4"><path d="M0 0H6.2 L3.1 3.4 Z" fill="#666"/></svg>
<div class="a" style="left:527.00px;top:171.30px;width:16.40px;height:16.40px;background:#ffffff;border:1px solid #a6a6a6;box-sizing:border-box;"></div>
<svg class="a" style="left:532.10px;top:178.00px;" width="6.2" height="3.4" viewBox="0 0 6.2 3.4"><path d="M0 0H6.2 L3.1 3.4 Z" fill="#666"/></svg>
<svg class="a" style="left:379.40px;top:172.00px;" width="18" height="15" viewBox="0 0 18 15"><text x="-0.2" y="11.7" font-family="Liberation Sans" font-size="10.2" fill="#555">A</text><text x="6.1" y="7.8" font-family="Liberation Sans" font-size="9.6" fill="#555">B</text><text x="10" y="13.9" font-family="Liberation Sans" font-size="9.8" fill="#555">C</text></svg>
<span class="t" style="left:402.40px;top:173.59px;font-size:12.30px;line-height:12.30px;color:#333;font-weight:700;transform:scaleX(0.8943);transform-origin:left center;">votedBy</span>
<div class="a" style="left:697.80px;top:171.30px;width:16.40px;height:16.40px;background:#ffffff;border:1px solid #a6a6a6;box-sizing:border-box;"></div>
<svg class="a" style="left:702.90px;top:178.00px;" width="6.2" height="3.4" viewBox="0 0 6.2 3.4"><path d="M0 0H6.2 L3.1 3.4 Z" fill="#666"/></svg>
<svg class="a" style="left:550.30px;top:172.00px;" width="18" height="15" viewBox="0 0 18 15"><text x="-0.3" y="14" font-family="Liberation Sans" font-size="10.6" fill="#555">1</text><text x="4.8" y="8.5" font-family="Liberation Sans" font-size="10.6" fill="#555">2</text><text x="10" y="14.2" font-family="Liberation Sans" font-size="10.4" fill="#555">3</text></svg>
<span class="t" style="left:572.80px;top:173.59px;font-size:12.30px;line-height:12.30px;color:#333;font-weight:700;transform:scaleX(0.8943);transform-origin:left center;">ballots</span>
<div class="a" style="left:868.60px;top:171.30px;width:16.40px;height:16.40px;background:#ffffff;border:1px solid #a6a6a6;box-sizing:border-box;"></div>
<svg class="a" style="left:873.70px;top:178.00px;" width="6.2" height="3.4" viewBox="0 0 6.2 3.4"><path d="M0 0H6.2 L3.1 3.4 Z" fill="#666"/></svg>
<svg class="a" style="left:721.10px;top:172.00px;" width="18" height="15" viewBox="0 0 18 15"><text x="-0.3" y="14" font-family="Liberation Sans" font-size="10.6" fill="#555">1</text><text x="4.8" y="8.5" font-family="Liberation Sans" font-size="10.6" fill="#555">2</text><text x="10" y="14.2" font-family="Liberation Sans" font-size="10.4" fill="#555">3</text></svg>
<span class="t" style="left:743.60px;top:173.59px;font-size:12.30px;line-height:12.30px;color:#333;font-weight:700;transform:scaleX(0.8943);transform-origin:left center;">needed</span>
<div class="a" style="left:1039.40px;top:171.30px;width:16.40px;height:16.40px;background:#ffffff;border:1px solid #a6a6a6;box-sizing:border-box;"></div>
<svg class="a" style="left:1044.50px;top:178.00px;" width="6.2" height="3.4" viewBox="0 0 6.2 3.4"><path d="M0 0H6.2 L3.1 3.4 Z" fill="#666"/></svg>
<svg class="a" style="left:891.90px;top:172.00px;" width="18" height="15" viewBox="0 0 18 15"><text x="-0.3" y="14" font-family="Liberation Sans" font-size="10.6" fill="#555">1</text><text x="4.8" y="8.5" font-family="Liberation Sans" font-size="10.6" fill="#555">2</text><text x="10" y="14.2" font-family="Liberation Sans" font-size="10.4" fill="#555">3</text></svg>
<span class="t" style="left:914.40px;top:173.59px;font-size:12.30px;line-height:12.30px;color:#333;font-weight:700;transform:scaleX(0.8943);transform-origin:left center;">votes</span>
<div class="a" style="left:1210.00px;top:171.30px;width:16.40px;height:16.40px;background:#ffffff;border:1px solid #a6a6a6;box-sizing:border-box;"></div>
<svg class="a" style="left:1215.10px;top:178.00px;" width="6.2" height="3.4" viewBox="0 0 6.2 3.4"><path d="M0 0H6.2 L3.1 3.4 Z" fill="#666"/></svg>
<svg class="a" style="left:1062.20px;top:172.00px;" width="18" height="15" viewBox="0 0 18 15"><text x="-0.2" y="11.7" font-family="Liberation Sans" font-size="10.2" fill="#555">A</text><text x="6.1" y="7.8" font-family="Liberation Sans" font-size="9.6" fill="#555">B</text><text x="10" y="13.9" font-family="Liberation Sans" font-size="9.8" fill="#555">C</text></svg>
<span class="t" style="left:1085.20px;top:173.59px;font-size:12.30px;line-height:12.30px;color:#333;font-weight:700;transform:scaleX(0.8943);transform-origin:left center;">inducted</span>
<div class="a" style="left:1380.80px;top:171.30px;width:16.40px;height:16.40px;background:#ffffff;border:1px solid #a6a6a6;box-sizing:border-box;"></div>
<svg class="a" style="left:1385.90px;top:178.00px;" width="6.2" height="3.4" viewBox="0 0 6.2 3.4"><path d="M0 0H6.2 L3.1 3.4 Z" fill="#666"/></svg>
<svg class="a" style="left:1232.80px;top:172.00px;" width="18" height="15" viewBox="0 0 18 15"><text x="-0.2" y="11.7" font-family="Liberation Sans" font-size="10.2" fill="#555">A</text><text x="6.1" y="7.8" font-family="Liberation Sans" font-size="9.6" fill="#555">B</text><text x="10" y="13.9" font-family="Liberation Sans" font-size="9.8" fill="#555">C</text></svg>
<span class="t" style="left:1255.80px;top:173.59px;font-size:12.30px;line-height:12.30px;color:#333;font-weight:700;transform:scaleX(0.8943);transform-origin:left center;">category</span>
<div class="a" style="left:1551.60px;top:171.30px;width:16.40px;height:16.40px;background:#ffffff;border:1px solid #a6a6a6;box-sizing:border-box;"></div>
<svg class="a" style="left:1556.70px;top:178.00px;" width="6.2" height="3.4" viewBox="0 0 6.2 3.4"><path d="M0 0H6.2 L3.1 3.4 Z" fill="#666"/></svg>
<svg class="a" style="left:1404.60px;top:172.00px;" width="18" height="15" viewBox="0 0 18 15"><text x="0" y="6.8" font-family="Liberation Sans" font-size="7" fill="#555" textLength="14.5">ABC</text><text x="0" y="14" font-family="Liberation Sans" font-size="8.6" fill="#555" textLength="14.5">123</text></svg>
<span class="t" style="left:1426.60px;top:173.59px;font-size:12.30px;line-height:12.30px;color:#333;font-weight:700;transform:scaleX(0.8943);transform-origin:left center;">needed_note</span>
<svg class="a" style="left:1573.90px;top:172.00px;" width="17" height="15" viewBox="0 0 17 15"><rect x="1" y="1" width="15" height="13" fill="#fff" stroke="#a9a9a9" stroke-width="1"/><path d="M6.00 1 V14" stroke="#a9a9a9" stroke-width="1"/><path d="M11.00 1 V14" stroke="#a9a9a9" stroke-width="1"/><path d="M1 4.25 H16" stroke="#a9a9a9" stroke-width="1"/><path d="M1 7.50 H16" stroke="#a9a9a9" stroke-width="1"/><path d="M1 10.75 H16" stroke="#a9a9a9" stroke-width="1"/><rect x="0.5" y="0.5" width="16" height="2.8" fill="#3d76bd"/></svg>
<span class="t" style="left:1597.40px;top:173.59px;font-size:12.30px;line-height:12.30px;color:#333;font-weight:700;transform:scaleX(0.8943);transform-origin:left center;">people</span>
<svg class="a" style="left:202.00px;top:172.00px;" width="22" height="16" viewBox="0 0 22 16"><rect x="1" y="1" width="15" height="13.5" fill="#fff" stroke="#b5b5b5" stroke-width="1"/><path d="M6.00 1 V14.5" stroke="#b5b5b5" stroke-width="1"/><path d="M11.00 1 V14.5" stroke="#b5b5b5" stroke-width="1"/><path d="M1 4.38 H16" stroke="#b5b5b5" stroke-width="1"/><path d="M1 7.75 H16" stroke="#b5b5b5" stroke-width="1"/><path d="M1 11.12 H16" stroke="#b5b5b5" stroke-width="1"/><rect x="0.5" y="0.5" width="16" height="3.0" fill="#3d76bd"/><path d="M17 11.2 H21 L19 13.8 Z" fill="#555"/></svg>
<div class="a" style="left:1721.60px;top:171.40px;width:17.00px;height:17.00px;background:#e2e4e8;border:1px solid #c3c3c3;box-sizing:border-box;"></div>
<svg class="a" style="left:1722.00px;top:172.00px;" width="16" height="16" viewBox="0 0 16 16"><path d="M1 7.3 L4.6 4.3 V10.3 Z M15 7.3 L11.4 4.3 V10.3 Z" fill="#555"/><path d="M4 7.3 H6.9 V14 M12 7.3 H9.1 V14" fill="none" stroke="#555" stroke-width="1.3"/></svg>
<div class="a" style="left:0;top:196px;width:1742px;height:864px;overflow:hidden;">
<span class="t" style="left:346.72px;top:6.27px;font-size:11.50px;line-height:11.50px;color:#3a3a3a;font-style:italic;">1936</span>
<span class="t" style="left:379.90px;top:5.52px;font-size:11.20px;line-height:11.20px;color:#3a3a3a;">BBWAA</span>
<span class="t" style="left:694.11px;top:6.27px;font-size:11.50px;line-height:11.50px;color:#3a3a3a;font-style:italic;">226</span>
<span class="t" style="left:864.91px;top:6.27px;font-size:11.50px;line-height:11.50px;color:#3a3a3a;font-style:italic;">170</span>
<span class="t" style="left:1035.71px;top:6.27px;font-size:11.50px;line-height:11.50px;color:#3a3a3a;font-style:italic;">222</span>
<span class="t" style="left:1062.70px;top:5.52px;font-size:11.20px;line-height:11.20px;color:#3a3a3a;">Y</span>
<span class="t" style="left:1233.50px;top:5.52px;font-size:11.20px;line-height:11.20px;color:#3a3a3a;">Player</span>
<span class="t" style="left:1549.00px;top:6.27px;font-size:11.50px;line-height:11.50px;color:#3a3a3a;font-style:italic;">null</span>
<span class="t" style="left:1575.20px;top:5.52px;font-size:11.20px;line-height:11.20px;color:#2e7d4f;">Table</span>
<span class="t" style="left:346.72px;top:29.27px;font-size:11.50px;line-height:11.50px;color:#3a3a3a;font-style:italic;">1936</span>
<span class="t" style="left:379.90px;top:28.52px;font-size:11.20px;line-height:11.20px;color:#3a3a3a;">BBWAA</span>
<span class="t" style="left:694.11px;top:29.27px;font-size:11.50px;line-height:11.50px;color:#3a3a3a;font-style:italic;">226</span>
<span class="t" style="left:864.91px;top:29.27px;font-size:11.50px;line-height:11.50px;color:#3a3a3a;font-style:italic;">170</span>
<span class="t" style="left:1035.71px;top:29.27px;font-size:11.50px;line-height:11.50px;color:#3a3a3a;font-style:italic;">215</span>
<span class="t" style="left:1062.70px;top:28.52px;font-size:11.20px;line-height:11.20px;color:#3a3a3a;">Y</span>
<span class="t" style="left:1233.50px;top:28.52px;font-size:11.20px;line-height:11.20px;color:#3a3a3a;">Player</span>
<span class="t" style="left:1549.00px;top:29.27px;font-size:11.50px;line-height:11.50px;color:#3a3a3a;font-style:italic;">null</span>
<span class="t" style="left:1575.20px;top:28.52px;font-size:11.20px;line-height:11.20px;color:#2e7d4f;">Table</span>
<span class="t" style="left:346.72px;top:51.27px;font-size:11.50px;line-height:11.50px;color:#3a3a3a;font-style:italic;">1936</span>
<span class="t" style="left:379.90px;top:50.52px;font-size:11.20px;line-height:11.20px;color:#3a3a3a;">BBWAA</span>
<span class="t" style="left:694.11px;top:51.27px;font-size:11.50px;line-height:11.50px;color:#3a3a3a;font-style:italic;">226</span>
<span class="t" style="left:864.91px;top:51.27px;font-size:11.50px;line-height:11.50px;color:#3a3a3a;font-style:italic;">170</span>
<span class="t" style="left:1035.71px;top:51.27px;font-size:11.50px;line-height:11.50px;color:#3a3a3a;font-style:italic;">215</span>
<span class="t" style="left:1062.70px;top:50.52px;font-size:11.20px;line-height:11.20px;color:#3a3a3a;">Y</span>
<span class="t" style="left:1233.50px;top:50.52px;font-size:11.20px;line-height:11.20px;color:#3a3a3a;">Player</span>
<span class="t" style="left:1549.00px;top:51.27px;font-size:11.50px;line-height:11.50px;color:#3a3a3a;font-style:italic;">null</span>
<span class="t" style="left:1575.20px;top:50.52px;font-size:11.20px;line-height:11.20px;color:#2e7d4f;">Table</span>
<span class="t" style="left:346.72px;top:73.27px;font-size:11.50px;line-height:11.50px;color:#3a3a3a;font-style:italic;">1936</span>
<span class="t" style="left:379.90px;top:72.52px;font-size:11.20px;line-height:11.20px;color:#3a3a3a;">BBWAA</span>
<span class="t" style="left:694.11px;top:73.27px;font-size:11.50px;line-height:11.50px;color:#3a3a3a;font-style:italic;">226</span>
<span class="t" style="left:864.91px;top:73.27px;font-size:11.50px;line-height:11.50px;color:#3a3a3a;font-style:italic;">170</span>
<span class="t" style="left:1035.71px;top:73.27px;font-size:11.50px;line-height:11.50px;color:#3a3a3a;font-style:italic;">205</span>
<span class="t" style="left:1062.70px;top:72.52px;font-size:11.20px;line-height:11.20px;color:#3a3a3a;">Y</span>
<span class="t" style="left:1233.50px;top:72.52px;font-size:11.20px;line-height:11.20px;color:#3a3a3a;">Player</span>
<span class="t" style="left:1549.00px;top:73.27px;font-size:11.50px;line-height:11.50px;color:#3a3a3a;font-style:italic;">null</span>
<span class="t" style="left:1575.20px;top:72.52px;font-size:11.20px;line-height:11.20px;color:#2e7d4f;">Table</span>
<span class="t" style="left:346.72px;top:96.27px;font-size:11.50px;line-height:11.50px;color:#3a3a3a;font-style:italic;">1936</span>
<span class="t" style="left:379.90px;top:95.52px;font-size:11.20px;line-height:11.20px;color:#3a3a3a;">BBWAA</span>
<span class="t" style="left:694.11px;top:96.27px;font-size:11.50px;line-height:11.50px;color:#3a3a3a;font-style:italic;">226</span>
<span class="t" style="left:864.91px;top:96.27px;font-size:11.50px;line-height:11.50px;color:#3a3a3a;font-style:italic;">170</span>
<span class="t" style="left:1035.71px;top:96.27px;font-size:11.50px;line-height:11.50px;color:#3a3a3a;font-style:italic;">189</span>
<span class="t" style="left:1062.70px;top:95.52px;font-size:11.20px;line-height:11.20px;color:#3a3a3a;">Y</span>
<span class="t" style="left:1233.50px;top:95.52px;font-size:11.20px;line-height:11.20px;color:#3a3a3a;">Player</span>
<span class="t" style="left:1549.00px;top:96.27px;font-size:11.50px;line-height:11.50px;color:#3a3a3a;font-style:italic;">null</span>
<span class="t" style="left:1575.20px;top:95.52px;font-size:11.20px;line-height:11.20px;color:#2e7d4f;">Table</span>
<span class="t" style="left:346.72px;top:118.27px;font-size:11.50px;line-height:11.50px;color:#3a3a3a;font-style:italic;">1936</span>
<span class="t" style="left:379.90px;top:117.52px;font-size:11.20px;line-height:11.20px;color:#3a3a3a;">BBWAA</span>
<span class="t" style="left:694.11px;top:118.27px;font-size:11.50px;line-height:11.50px;color:#3a3a3a;font-style:italic;">226</span>
<span class="t" style="left:864.91px;top:118.27px;font-size:11.50px;line-height:11.50px;color:#3a3a3a;font-style:italic;">170</span>
<span class="t" style="left:1035.71px;top:118.27px;font-size:11.50px;line-height:11.50px;color:#3a3a3a;font-style:italic;">146</span>
<span class="t" style="left:1062.70px;top:117.52px;font-size:11.20px;line-height:11.20px;color:#3a3a3a;">N</span>
<span class="t" style="left:1233.50px;top:117.52px;font-size:11.20px;line-height:11.20px;color:#3a3a3a;">Player</span>
<span class="t" style="left:1549.00px;top:118.27px;font-size:11.50px;line-height:11.50px;color:#3a3a3a;font-style:italic;">null</span>
<span class="t" style="left:1575.20px;top:117.52px;font-size:11.20px;line-height:11.20px;color:#2e7d4f;">Table</span>
<span class="t" style="left:346.72px;top:141.27px;font-size:11.50px;line-height:11.50px;color:#3a3a3a;font-style:italic;">1936</span>
<span class="t" style="left:379.90px;top:140.52px;font-size:11.20px;line-height:11.20px;color:#3a3a3a;">BBWAA</span>
<span class="t" style="left:694.11px;top:141.27px;font-size:11.50px;line-height:11.50px;color:#3a3a3a;font-style:italic;">226</span>
<span class="t" style="left:864.91px;top:141.27px;font-size:11.50px;line-height:11.50px;color:#3a3a3a;font-style:italic;">170</span>
<span class="t" style="left:1035.71px;top:141.27px;font-size:11.50px;line-height:11.50px;color:#3a3a3a;font-style:italic;">133</span>
<span class="t" style="left:1062.70px;top:140.52px;font-size:11.20px;line-height:11.20px;color:#3a3a3a;">N</span>
<span class="t" style="left:1233.50px;top:140.52px;font-size:11.20px;line-height:11.20px;color:#3a3a3a;">Player</span>
<span class="t" style="left:1549.00px;top:141.27px;font-size:11.50px;line-height:11.50px;color:#3a3a3a;font-style:italic;">null</span>
<span class="t" style="left:1575.20px;top:140.52px;font-size:11.20px;line-height:11.20px;color:#2e7d4f;">Table</span>
<span class="t" style="left:346.72px;top:163.27px;font-size:11.50px;line-height:11.50px;color:#3a3a3a;font-style:italic;">1936</span>
<span class="t" style="left:379.90px;top:162.52px;font-size:11.20px;line-height:11.20px;color:#3a3a3a;">BBWAA</span>
<span class="t" style="left:694.11px;top:163.27px;font-size:11.50px;line-height:11.50px;color:#3a3a3a;font-style:italic;">226</span>
<span class="t" style="left:864.91px;top:163.27px;font-size:11.50px;line-height:11.50px;color:#3a3a3a;font-style:italic;">170</span>
<span class="t" style="left:1037.42px;top:163.27px;font-size:11.50px;line-height:11.50px;color:#3a3a3a;font-style:italic;">111</span>
<span class="t" style="left:1062.70px;top:162.52px;font-size:11.20px;line-height:11.20px;color:#3a3a3a;">N</span>
<span class="t" style="left:1233.50px;top:162.52px;font-size:11.20px;line-height:11.20px;color:#3a3a3a;">Player</span>
<span class="t" style="left:1549.00px;top:163.27px;font-size:11.50px;line-height:11.50px;color:#3a3a3a;font-style:italic;">null</span>
<span class="t" style="left:1575.20px;top:162.52px;font-size:11.20px;line-height:11.20px;color:#2e7d4f;">Table</span>
<span class="t" style="left:346.72px;top:185.27px;font-size:11.50px;line-height:11.50px;color:#3a3a3a;font-style:italic;">1936</span>
<span class="t" style="left:379.90px;top:184.52px;font-size:11.20px;line-height:11.20px;color:#3a3a3a;">BBWAA</span>
<span class="t" style="left:694.11px;top:185.27px;font-size:11.50px;line-height:11.50px;color:#3a3a3a;font-style:italic;">226</span>
<span class="t" style="left:864.91px;top:185.27px;font-size:11.50px;line-height:11.50px;color:#3a3a3a;font-style:italic;">170</span>
<span class="t" style="left:1035.71px;top:185.27px;font-size:11.50px;line-height:11.50px;color:#3a3a3a;font-style:italic;">105</span>
<span class="t" style="left:1062.70px;top:184.52px;font-size:11.20px;line-height:11.20px;color:#3a3a3a;">N</span>
<span class="t" style="left:1233.50px;top:184.52px;font-size:11.20px;line-height:11.20px;color:#3a3a3a;">Player</span>
<span class="t" style="left:1549.00px;top:185.27px;font-size:11.50px;line-height:11.50px;color:#3a3a3a;font-style:italic;">null</span>
<span class="t" style="left:1575.20px;top:184.52px;font-size:11.20px;line-height:11.20px;color:#2e7d4f;">Table</span>
<span class="t" style="left:346.72px;top:208.27px;font-size:11.50px;line-height:11.50px;color:#3a3a3a;font-style:italic;">1936</span>
<span class="t" style="left:379.90px;top:207.52px;font-size:11.20px;line-height:11.20px;color:#3a3a3a;">BBWAA</span>
<span class="t" style="left:694.11px;top:208.27px;font-size:11.50px;line-height:11.50px;color:#3a3a3a;font-style:italic;">226</span>
<span class="t" style="left:864.91px;top:208.27px;font-size:11.50px;line-height:11.50px;color:#3a3a3a;font-style:italic;">170</span>
<span class="t" style="left:1042.11px;top:208.27px;font-size:11.50px;line-height:11.50px;color:#3a3a3a;font-style:italic;">80</span>
<span class="t" style="left:1062.70px;top:207.52px;font-size:11.20px;line-height:11.20px;color:#3a3a3a;">N</span>
<span class="t" style="left:1233.50px;top:207.52px;font-size:11.20px;line-height:11.20px;color:#3a3a3a;">Player</span>
<span class="t" style="left:1549.00px;top:208.27px;font-size:11.50px;line-height:11.50px;color:#3a3a3a;font-style:italic;">null</span>
<span class="t" style="left:1575.20px;top:207.52px;font-size:11.20px;line-height:11.20px;color:#2e7d4f;">Table</span>
<span class="t" style="left:346.72px;top:230.27px;font-size:11.50px;line-height:11.50px;color:#3a3a3a;font-style:italic;">1936</span>
<span class="t" style="left:379.90px;top:229.52px;font-size:11.20px;line-height:11.20px;color:#3a3a3a;">BBWAA</span>
<span class="t" style="left:694.11px;top:230.27px;font-size:11.50px;line-height:11.50px;color:#3a3a3a;font-style:italic;">226</span>
<span class="t" style="left:864.91px;top:230.27px;font-size:11.50px;line-height:11.50px;color:#3a3a3a;font-style:italic;">170</span>
<span class="t" style="left:1042.11px;top:230.27px;font-size:11.50px;line-height:11.50px;color:#3a3a3a;font-style:italic;">77</span>
<span class="t" style="left:1062.70px;top:229.52px;font-size:11.20px;line-height:11.20px;color:#3a3a3a;">N</span>
<span class="t" style="left:1233.50px;top:229.52px;font-size:11.20px;line-height:11.20px;color:#3a3a3a;">Player</span>
<span class="t" style="left:1549.00px;top:230.27px;font-size:11.50px;line-height:11.50px;color:#3a3a3a;font-style:italic;">null</span>
<span class="t" style="left:1575.20px;top:229.52px;font-size:11.20px;line-height:11.20px;color:#2e7d4f;">Table</span>
<span class="t" style="left:346.72px;top:253.27px;font-size:11.50px;line-height:11.50px;color:#3a3a3a;font-style:italic;">1936</span>
<span class="t" style="left:379.90px;top:252.52px;font-size:11.20px;line-height:11.20px;color:#3a3a3a;">BBWAA</span>
<span class="t" style="left:694.11px;top:253.27px;font-size:11.50px;line-height:11.50px;color:#3a3a3a;font-style:italic;">226</span>
<span class="t" style="left:864.91px;top:253.27px;font-size:11.50px;line-height:11.50px;color:#3a3a3a;font-style:italic;">170</span>
<span class="t" style="left:1042.11px;top:253.27px;font-size:11.50px;line-height:11.50px;color:#3a3a3a;font-style:italic;">60</span>
<span class="t" style="left:1062.70px;top:252.52px;font-size:11.20px;line-height:11.20px;color:#3a3a3a;">N</span>
<span class="t" style="left:1233.50px;top:252.52px;font-size:11.20px;line-height:11.20px;color:#3a3a3a;">Player</span>
<span class="t" style="left:1549.00px;top:253.27px;font-size:11.50px;line-height:11.50px;color:#3a3a3a;font-style:italic;">null</span>
<span class="t" style="left:1575.20px;top:252.52px;font-size:11.20px;line-height:11.20px;color:#2e7d4f;">Table</span>
<span class="t" style="left:346.72px;top:275.27px;font-size:11.50px;line-height:11.50px;color:#3a3a3a;font-style:italic;">1936</span>
<span class="t" style="left:379.90px;top:274.52px;font-size:11.20px;line-height:11.20px;color:#3a3a3a;">BBWAA</span>
<span class="t" style="left:694.11px;top:275.27px;font-size:11.50px;line-height:11.50px;color:#3a3a3a;font-style:italic;">226</span>
<span class="t" style="left:864.91px;top:275.27px;font-size:11.50px;line-height:11.50px;color:#3a3a3a;font-style:italic;">170</span>
<span class="t" style="left:1042.11px;top:275.27px;font-size:11.50px;line-height:11.50px;color:#3a3a3a;font-style:italic;">58</span>
<span class="t" style="left:1062.70px;top:274.52px;font-size:11.20px;line-height:11.20px;color:#3a3a3a;">N</span>
<span class="t" style="left:1233.50px;top:274.52px;font-size:11.20px;line-height:11.20px;color:#3a3a3a;">Player</span>
<span class="t" style="left:1549.00px;top:275.27px;font-size:11.50px;line-height:11.50px;color:#3a3a3a;font-style:italic;">null</span>
<span class="t" style="left:1575.20px;top:274.52px;font-size:11.20px;line-height:11.20px;color:#2e7d4f;">Table</span>
<span class="t" style="left:346.72px;top:298.27px;font-size:11.50px;line-height:11.50px;color:#3a3a3a;font-style:italic;">1936</span>
<span class="t" style="left:379.90px;top:297.52px;font-size:11.20px;line-height:11.20px;color:#3a3a3a;">BBWAA</span>
<span class="t" style="left:694.11px;top:298.27px;font-size:11.50px;line-height:11.50px;color:#3a3a3a;font-style:italic;">226</span>
<span class="t" style="left:864.91px;top:298.27px;font-size:11.50px;line-height:11.50px;color:#3a3a3a;font-style:italic;">170</span>
<span class="t" style="left:1042.11px;top:298.27px;font-size:11.50px;line-height:11.50px;color:#3a3a3a;font-style:italic;">55</span>
<span class="t" style="left:1062.70px;top:297.52px;font-size:11.20px;line-height:11.20px;color:#3a3a3a;">N</span>
<span class="t" style="left:1233.50px;top:297.52px;font-size:11.20px;line-height:11.20px;color:#3a3a3a;">Player</span>
<span class="t" style="left:1549.00px;top:298.27px;font-size:11.50px;line-height:11.50px;color:#3a3a3a;font-style:italic;">null</span>
<span class="t" style="left:1575.20px;top:297.52px;font-size:11.20px;line-height:11.20px;color:#2e7d4f;">Table</span>
<span class="t" style="left:346.72px;top:320.27px;font-size:11.50px;line-height:11.50px;color:#3a3a3a;font-style:italic;">1936</span>
<span class="t" style="left:379.90px;top:319.52px;font-size:11.20px;line-height:11.20px;color:#3a3a3a;">BBWAA</span>
<span class="t" style="left:694.11px;top:320.27px;font-size:11.50px;line-height:11.50px;color:#3a3a3a;font-style:italic;">226</span>
<span class="t" style="left:864.91px;top:320.27px;font-size:11.50px;line-height:11.50px;color:#3a3a3a;font-style:italic;">170</span>
<span class="t" style="left:1042.11px;top:320.27px;font-size:11.50px;line-height:11.50px;color:#3a3a3a;font-style:italic;">51</span>
<span class="t" style="left:1062.70px;top:319.52px;font-size:11.20px;line-height:11.20px;color:#3a3a3a;">N</span>
<span class="t" style="left:1233.50px;top:319.52px;font-size:11.20px;line-height:11.20px;color:#3a3a3a;">Player</span>
<span class="t" style="left:1549.00px;top:320.27px;font-size:11.50px;line-height:11.50px;color:#3a3a3a;font-style:italic;">null</span>
<span class="t" style="left:1575.20px;top:319.52px;font-size:11.20px;line-height:11.20px;color:#2e7d4f;">Table</span>
<span class="t" style="left:346.72px;top:342.27px;font-size:11.50px;line-height:11.50px;color:#3a3a3a;font-style:italic;">1936</span>
<span class="t" style="left:379.90px;top:341.52px;font-size:11.20px;line-height:11.20px;color:#3a3a3a;">BBWAA</span>
<span class="t" style="left:694.11px;top:342.27px;font-size:11.50px;line-height:11.50px;color:#3a3a3a;font-style:italic;">226</span>
<span class="t" style="left:864.91px;top:342.27px;font-size:11.50px;line-height:11.50px;color:#3a3a3a;font-style:italic;">170</span>
<span class="t" style="left:1042.11px;top:342.27px;font-size:11.50px;line-height:11.50px;color:#3a3a3a;font-style:italic;">47</span>
<span class="t" style="left:1062.70px;top:341.52px;font-size:11.20px;line-height:11.20px;color:#3a3a3a;">N</span>
<span class="t" style="left:1233.50px;top:341.52px;font-size:11.20px;line-height:11.20px;color:#3a3a3a;">Player</span>
<span class="t" style="left:1549.00px;top:342.27px;font-size:11.50px;line-height:11.50px;color:#3a3a3a;font-style:italic;">null</span>
<span class="t" style="left:1575.20px;top:341.52px;font-size:11.20px;line-height:11.20px;color:#2e7d4f;">Table</span>
<span class="t" style="left:346.72px;top:365.27px;font-size:11.50px;line-height:11.50px;color:#3a3a3a;font-style:italic;">1936</span>
<span class="t" style="left:379.90px;top:364.52px;font-size:11.20px;line-height:11.20px;color:#3a3a3a;">BBWAA</span>
<span class="t" style="left:694.11px;top:365.27px;font-size:11.50px;line-height:11.50px;color:#3a3a3a;font-style:italic;">226</span>
<span class="t" style="left:864.91px;top:365.27px;font-size:11.50px;line-height:11.50px;color:#3a3a3a;font-style:italic;">170</span>
<span class="t" style="left:1042.11px;top:365.27px;font-size:11.50px;line-height:11.50px;color:#3a3a3a;font-style:italic;">40</span>
<span class="t" style="left:1062.70px;top:364.52px;font-size:11.20px;line-height:11.20px;color:#3a3a3a;">N</span>
<span class="t" style="left:1233.50px;top:364.52px;font-size:11.20px;line-height:11.20px;color:#3a3a3a;">Player</span>
<span class="t" style="left:1549.00px;top:365.27px;font-size:11.50px;line-height:11.50px;color:#3a3a3a;font-style:italic;">null</span>
<span class="t" style="left:1575.20px;top:364.52px;font-size:11.20px;line-height:11.20px;color:#2e7d4f;">Table</span>
<span class="t" style="left:346.72px;top:387.27px;font-size:11.50px;line-height:11.50px;color:#3a3a3a;font-style:italic;">1936</span>
<span class="t" style="left:379.90px;top:386.52px;font-size:11.20px;line-height:11.20px;color:#3a3a3a;">Veterans</span>
<span class="t" style="left:700.51px;top:387.27px;font-size:11.50px;line-height:11.50px;color:#3a3a3a;font-style:italic;">78</span>
<span class="t" style="left:871.31px;top:387.27px;font-size:11.50px;line-height:11.50px;color:#3a3a3a;font-style:italic;">59</span>
<span class="t" style="left:1042.11px;top:387.27px;font-size:11.50px;line-height:11.50px;color:#3a3a3a;font-style:italic;">39</span>
<span class="t" style="left:1062.70px;top:386.52px;font-size:11.20px;line-height:11.20px;color:#3a3a3a;">N</span>
<span class="t" style="left:1233.50px;top:386.52px;font-size:11.20px;line-height:11.20px;color:#3a3a3a;">Player</span>
<span class="t" style="left:1549.00px;top:387.27px;font-size:11.50px;line-height:11.50px;color:#3a3a3a;font-style:italic;">null</span>
<span class="t" style="left:1575.20px;top:386.52px;font-size:11.20px;line-height:11.20px;color:#2e7d4f;">Table</span>
<span class="t" style="left:346.72px;top:410.27px;font-size:11.50px;line-height:11.50px;color:#3a3a3a;font-style:italic;">1936</span>
<span class="t" style="left:379.90px;top:409.52px;font-size:11.20px;line-height:11.20px;color:#3a3a3a;">Veterans</span>
<span class="t" style="left:700.51px;top:410.27px;font-size:11.50px;line-height:11.50px;color:#3a3a3a;font-style:italic;">78</span>
<span class="t" style="left:871.31px;top:410.27px;font-size:11.50px;line-height:11.50px;color:#3a3a3a;font-style:italic;">59</span>
<span class="t" style="left:1042.11px;top:410.27px;font-size:11.50px;line-height:11.50px;color:#3a3a3a;font-style:italic;">39</span>
<span class="t" style="left:1062.70px;top:409.52px;font-size:11.20px;line-height:11.20px;color:#3a3a3a;">N</span>
<span class="t" style="left:1233.50px;top:409.52px;font-size:11.20px;line-height:11.20px;color:#3a3a3a;">Player</span>
<span class="t" style="left:1549.00px;top:410.27px;font-size:11.50px;line-height:11.50px;color:#3a3a3a;font-style:italic;">null</span>
<span class="t" style="left:1575.20px;top:409.52px;font-size:11.20px;line-height:11.20px;color:#2e7d4f;">Table</span>
<span class="t" style="left:346.72px;top:432.27px;font-size:11.50px;line-height:11.50px;color:#3a3a3a;font-style:italic;">1936</span>
<span class="t" style="left:379.90px;top:431.52px;font-size:11.20px;line-height:11.20px;color:#3a3a3a;">Veterans</span>
<span class="t" style="left:700.51px;top:432.27px;font-size:11.50px;line-height:11.50px;color:#3a3a3a;font-style:italic;">78</span>
<span class="t" style="left:871.31px;top:432.27px;font-size:11.50px;line-height:11.50px;color:#3a3a3a;font-style:italic;">59</span>
<span class="t" style="left:1042.11px;top:432.27px;font-size:11.50px;line-height:11.50px;color:#3a3a3a;font-style:italic;">33</span>
<span class="t" style="left:1062.70px;top:431.52px;font-size:11.20px;line-height:11.20px;color:#3a3a3a;">N</span>
<span class="t" style="left:1233.50px;top:431.52px;font-size:11.20px;line-height:11.20px;color:#3a3a3a;">Player</span>
<span class="t" style="left:1549.00px;top:432.27px;font-size:11.50px;line-height:11.50px;color:#3a3a3a;font-style:italic;">null</span>
<span class="t" style="left:1575.20px;top:431.52px;font-size:11.20px;line-height:11.20px;color:#2e7d4f;">Table</span>
<span class="t" style="left:346.72px;top:454.27px;font-size:11.50px;line-height:11.50px;color:#3a3a3a;font-style:italic;">1936</span>
<span class="t" style="left:379.90px;top:453.52px;font-size:11.20px;line-height:11.20px;color:#3a3a3a;">BBWAA</span>
<span class="t" style="left:694.11px;top:454.27px;font-size:11.50px;line-height:11.50px;color:#3a3a3a;font-style:italic;">226</span>
<span class="t" style="left:864.91px;top:454.27px;font-size:11.50px;line-height:11.50px;color:#3a3a3a;font-style:italic;">170</span>
<span class="t" style="left:1042.11px;top:454.27px;font-size:11.50px;line-height:11.50px;color:#3a3a3a;font-style:italic;">33</span>
<span class="t" style="left:1062.70px;top:453.52px;font-size:11.20px;line-height:11.20px;color:#3a3a3a;">N</span>
<span class="t" style="left:1233.50px;top:453.52px;font-size:11.20px;line-height:11.20px;color:#3a3a3a;">Player</span>
<span class="t" style="left:1549.00px;top:454.27px;font-size:11.50px;line-height:11.50px;color:#3a3a3a;font-style:italic;">null</span>
<span class="t" style="left:1575.20px;top:453.52px;font-size:11.20px;line-height:11.20px;color:#2e7d4f;">Table</span>
<span class="t" style="left:346.72px;top:477.27px;font-size:11.50px;line-height:11.50px;color:#3a3a3a;font-style:italic;">1936</span>
<span class="t" style="left:379.90px;top:476.52px;font-size:11.20px;line-height:11.20px;color:#3a3a3a;">Veterans</span>
<span class="t" style="left:700.51px;top:477.27px;font-size:11.50px;line-height:11.50px;color:#3a3a3a;font-style:italic;">78</span>
<span class="t" style="left:871.31px;top:477.27px;font-size:11.50px;line-height:11.50px;color:#3a3a3a;font-style:italic;">59</span>
<span class="t" style="left:1042.11px;top:477.27px;font-size:11.50px;line-height:11.50px;color:#3a3a3a;font-style:italic;">32</span>
<span class="t" style="left:1062.70px;top:476.52px;font-size:11.20px;line-height:11.20px;color:#3a3a3a;">N</span>
<span class="t" style="left:1233.50px;top:476.52px;font-size:11.20px;line-height:11.20px;color:#3a3a3a;">Player</span>
<span class="t" style="left:1549.00px;top:477.27px;font-size:11.50px;line-height:11.50px;color:#3a3a3a;font-style:italic;">null</span>
<span class="t" style="left:1575.20px;top:476.52px;font-size:11.20px;line-height:11.20px;color:#2e7d4f;">Table</span>
<span class="t" style="left:346.72px;top:499.27px;font-size:11.50px;line-height:11.50px;color:#3a3a3a;font-style:italic;">1936</span>
<span class="t" style="left:379.90px;top:498.52px;font-size:11.20px;line-height:11.20px;color:#3a3a3a;">Veterans</span>
<span class="t" style="left:700.51px;top:499.27px;font-size:11.50px;line-height:11.50px;color:#3a3a3a;font-style:italic;">78</span>
<span class="t" style="left:871.31px;top:499.27px;font-size:11.50px;line-height:11.50px;color:#3a3a3a;font-style:italic;">59</span>
<span class="t" style="left:1042.11px;top:499.27px;font-size:11.50px;line-height:11.50px;color:#3a3a3a;font-style:italic;">21</span>
<span class="t" style="left:1062.70px;top:498.52px;font-size:11.20px;line-height:11.20px;color:#3a3a3a;">N</span>
<span class="t" style="left:1233.50px;top:498.52px;font-size:11.20px;line-height:11.20px;color:#3a3a3a;">Player</span>
<span class="t" style="left:1549.00px;top:499.27px;font-size:11.50px;line-height:11.50px;color:#3a3a3a;font-style:italic;">null</span>
<span class="t" style="left:1575.20px;top:498.52px;font-size:11.20px;line-height:11.20px;color:#2e7d4f;">Table</span>
<span class="t" style="left:346.72px;top:522.27px;font-size:11.50px;line-height:11.50px;color:#3a3a3a;font-style:italic;">1936</span>
<span class="t" style="left:379.90px;top:521.52px;font-size:11.20px;line-height:11.20px;color:#3a3a3a;">BBWAA</span>
<span class="t" style="left:694.11px;top:522.27px;font-size:11.50px;line-height:11.50px;color:#3a3a3a;font-style:italic;">226</span>
<span class="t" style="left:864.91px;top:522.27px;font-size:11.50px;line-height:11.50px;color:#3a3a3a;font-style:italic;">170</span>
<span class="t" style="left:1042.11px;top:522.27px;font-size:11.50px;line-height:11.50px;color:#3a3a3a;font-style:italic;">21</span>
<span class="t" style="left:1062.70px;top:521.52px;font-size:11.20px;line-height:11.20px;color:#3a3a3a;">N</span>
<span class="t" style="left:1233.50px;top:521.52px;font-size:11.20px;line-height:11.20px;color:#3a3a3a;">Player</span>
<span class="t" style="left:1549.00px;top:522.27px;font-size:11.50px;line-height:11.50px;color:#3a3a3a;font-style:italic;">null</span>
<span class="t" style="left:1575.20px;top:521.52px;font-size:11.20px;line-height:11.20px;color:#2e7d4f;">Table</span>
<span class="t" style="left:346.72px;top:544.27px;font-size:11.50px;line-height:11.50px;color:#3a3a3a;font-style:italic;">1936</span>
<span class="t" style="left:379.90px;top:543.52px;font-size:11.20px;line-height:11.20px;color:#3a3a3a;">BBWAA</span>
<span class="t" style="left:694.11px;top:544.27px;font-size:11.50px;line-height:11.50px;color:#3a3a3a;font-style:italic;">226</span>
<span class="t" style="left:864.91px;top:544.27px;font-size:11.50px;line-height:11.50px;color:#3a3a3a;font-style:italic;">170</span>
<span class="t" style="left:1042.11px;top:544.27px;font-size:11.50px;line-height:11.50px;color:#3a3a3a;font-style:italic;">20</span>
<span class="t" style="left:1062.70px;top:543.52px;font-size:11.20px;line-height:11.20px;color:#3a3a3a;">N</span>
<span class="t" style="left:1233.50px;top:543.52px;font-size:11.20px;line-height:11.20px;color:#3a3a3a;">Player</span>
<span class="t" style="left:1549.00px;top:544.27px;font-size:11.50px;line-height:11.50px;color:#3a3a3a;font-style:italic;">null</span>
<span class="t" style="left:1575.20px;top:543.52px;font-size:11.20px;line-height:11.20px;color:#2e7d4f;">Table</span>
<span class="t" style="left:346.72px;top:566.27px;font-size:11.50px;line-height:11.50px;color:#3a3a3a;font-style:italic;">1936</span>
<span class="t" style="left:379.90px;top:565.52px;font-size:11.20px;line-height:11.20px;color:#3a3a3a;">Veterans</span>
<span class="t" style="left:700.51px;top:566.27px;font-size:11.50px;line-height:11.50px;color:#3a3a3a;font-style:italic;">78</span>
<span class="t" style="left:871.31px;top:566.27px;font-size:11.50px;line-height:11.50px;color:#3a3a3a;font-style:italic;">59</span>
<span class="t" style="left:1042.11px;top:566.27px;font-size:11.50px;line-height:11.50px;color:#3a3a3a;font-style:italic;">17</span>
<span class="t" style="left:1062.70px;top:565.52px;font-size:11.20px;line-height:11.20px;color:#3a3a3a;">N</span>
<span class="t" style="left:1233.50px;top:565.52px;font-size:11.20px;line-height:11.20px;color:#3a3a3a;">Player</span>
<span class="t" style="left:1549.00px;top:566.27px;font-size:11.50px;line-height:11.50px;color:#3a3a3a;font-style:italic;">null</span>
<span class="t" style="left:1575.20px;top:565.52px;font-size:11.20px;line-height:11.20px;color:#2e7d4f;">Table</span>
<span class="t" style="left:346.72px;top:589.27px;font-size:11.50px;line-height:11.50px;color:#3a3a3a;font-style:italic;">1936</span>
<span class="t" style="left:379.90px;top:588.52px;font-size:11.20px;line-height:11.20px;color:#3a3a3a;">BBWAA</span>
<span class="t" style="left:694.11px;top:589.27px;font-size:11.50px;line-height:11.50px;color:#3a3a3a;font-style:italic;">226</span>
<span class="t" style="left:864.91px;top:589.27px;font-size:11.50px;line-height:11.50px;color:#3a3a3a;font-style:italic;">170</span>
<span class="t" style="left:1042.11px;top:589.27px;font-size:11.50px;line-height:11.50px;color:#3a3a3a;font-style:italic;">17</span>
<span class="t" style="left:1062.70px;top:588.52px;font-size:11.20px;line-height:11.20px;color:#3a3a3a;">N</span>
<span class="t" style="left:1233.50px;top:588.52px;font-size:11.20px;line-height:11.20px;color:#3a3a3a;">Player</span>
<span class="t" style="left:1549.00px;top:589.27px;font-size:11.50px;line-height:11.50px;color:#3a3a3a;font-style:italic;">null</span>
<span class="t" style="left:1575.20px;top:588.52px;font-size:11.20px;line-height:11.20px;color:#2e7d4f;">Table</span>
<span class="t" style="left:346.72px;top:611.27px;font-size:11.50px;line-height:11.50px;color:#3a3a3a;font-style:italic;">1936</span>
<span class="t" style="left:379.90px;top:610.52px;font-size:11.20px;line-height:11.20px;color:#3a3a3a;">Veterans</span>
<span class="t" style="left:700.51px;top:611.27px;font-size:11.50px;line-height:11.50px;color:#3a3a3a;font-style:italic;">78</span>
<span class="t" style="left:871.31px;top:611.27px;font-size:11.50px;line-height:11.50px;color:#3a3a3a;font-style:italic;">59</span>
<span class="t" style="left:1042.11px;top:611.27px;font-size:11.50px;line-height:11.50px;color:#3a3a3a;font-style:italic;">16</span>
<span class="t" style="left:1062.70px;top:610.52px;font-size:11.20px;line-height:11.20px;color:#3a3a3a;">N</span>
<span class="t" style="left:1233.50px;top:610.52px;font-size:11.20px;line-height:11.20px;color:#3a3a3a;">Player</span>
<span class="t" style="left:1549.00px;top:611.27px;font-size:11.50px;line-height:11.50px;color:#3a3a3a;font-style:italic;">null</span>
<span class="t" style="left:1575.20px;top:610.52px;font-size:11.20px;line-height:11.20px;color:#2e7d4f;">Table</span>
<span class="t" style="left:346.72px;top:634.27px;font-size:11.50px;line-height:11.50px;color:#3a3a3a;font-style:italic;">1936</span>
<span class="t" style="left:379.90px;top:633.52px;font-size:11.20px;line-height:11.20px;color:#3a3a3a;">BBWAA</span>
<span class="t" style="left:694.11px;top:634.27px;font-size:11.50px;line-height:11.50px;color:#3a3a3a;font-style:italic;">226</span>
<span class="t" style="left:864.91px;top:634.27px;font-size:11.50px;line-height:11.50px;color:#3a3a3a;font-style:italic;">170</span>
<span class="t" style="left:1042.11px;top:634.27px;font-size:11.50px;line-height:11.50px;color:#3a3a3a;font-style:italic;">16</span>
<span class="t" style="left:1062.70px;top:633.52px;font-size:11.20px;line-height:11.20px;color:#3a3a3a;">N</span>
<span class="t" style="left:1233.50px;top:633.52px;font-size:11.20px;line-height:11.20px;color:#3a3a3a;">Player</span>
<span class="t" style="left:1549.00px;top:634.27px;font-size:11.50px;line-height:11.50px;color:#3a3a3a;font-style:italic;">null</span>
<span class="t" style="left:1575.20px;top:633.52px;font-size:11.20px;line-height:11.20px;color:#2e7d4f;">Table</span>
<span class="t" style="left:346.72px;top:656.27px;font-size:11.50px;line-height:11.50px;color:#3a3a3a;font-style:italic;">1936</span>
<span class="t" style="left:379.90px;top:655.52px;font-size:11.20px;line-height:11.20px;color:#3a3a3a;">Veterans</span>
<span class="t" style="left:700.51px;top:656.27px;font-size:11.50px;line-height:11.50px;color:#3a3a3a;font-style:italic;">78</span>
<span class="t" style="left:871.31px;top:656.27px;font-size:11.50px;line-height:11.50px;color:#3a3a3a;font-style:italic;">59</span>
<span class="t" style="left:1042.11px;top:656.27px;font-size:11.50px;line-height:11.50px;color:#3a3a3a;font-style:italic;">15</span>
<span class="t" style="left:1062.70px;top:655.52px;font-size:11.20px;line-height:11.20px;color:#3a3a3a;">N</span>
<span class="t" style="left:1233.50px;top:655.52px;font-size:11.20px;line-height:11.20px;color:#3a3a3a;">Player</span>
<span class="t" style="left:1549.00px;top:656.27px;font-size:11.50px;line-height:11.50px;color:#3a3a3a;font-style:italic;">null</span>
<span class="t" style="left:1575.20px;top:655.52px;font-size:11.20px;line-height:11.20px;color:#2e7d4f;">Table</span>
<span class="t" style="left:346.72px;top:679.27px;font-size:11.50px;line-height:11.50px;color:#3a3a3a;font-style:italic;">1936</span>
<span class="t" style="left:379.90px;top:678.52px;font-size:11.20px;line-height:11.20px;color:#3a3a3a;">Veterans</span>
<span class="t" style="left:700.51px;top:679.27px;font-size:11.50px;line-height:11.50px;color:#3a3a3a;font-style:italic;">78</span>
<span class="t" style="left:871.31px;top:679.27px;font-size:11.50px;line-height:11.50px;color:#3a3a3a;font-style:italic;">59</span>
<span class="t" style="left:1042.11px;top:679.27px;font-size:11.50px;line-height:11.50px;color:#3a3a3a;font-style:italic;">15</span>
<span class="t" style="left:1062.70px;top:678.52px;font-size:11.20px;line-height:11.20px;color:#3a3a3a;">N</span>
<span class="t" style="left:1233.50px;top:678.52px;font-size:11.20px;line-height:11.20px;color:#3a3a3a;">Player</span>
<span class="t" style="left:1549.00px;top:679.27px;font-size:11.50px;line-height:11.50px;color:#3a3a3a;font-style:italic;">null</span>
<span class="t" style="left:1575.20px;top:678.52px;font-size:11.20px;line-height:11.20px;color:#2e7d4f;">Table</span>
<span class="t" style="left:346.72px;top:701.27px;font-size:11.50px;line-height:11.50px;color:#3a3a3a;font-style:italic;">1936</span>
<span class="t" style="left:379.90px;top:700.52px;font-size:11.20px;line-height:11.20px;color:#3a3a3a;">BBWAA</span>
<span class="t" style="left:694.11px;top:701.27px;font-size:11.50px;line-height:11.50px;color:#3a3a3a;font-style:italic;">226</span>
<span class="t" style="left:864.91px;top:701.27px;font-size:11.50px;line-height:11.50px;color:#3a3a3a;font-style:italic;">170</span>
<span class="t" style="left:1042.11px;top:701.27px;font-size:11.50px;line-height:11.50px;color:#3a3a3a;font-style:italic;">14</span>
<span class="t" style="left:1062.70px;top:700.52px;font-size:11.20px;line-height:11.20px;color:#3a3a3a;">N</span>
<span class="t" style="left:1233.50px;top:700.52px;font-size:11.20px;line-height:11.20px;color:#3a3a3a;">Player</span>
<span class="t" style="left:1549.00px;top:701.27px;font-size:11.50px;line-height:11.50px;color:#3a3a3a;font-style:italic;">null</span>
<span class="t" style="left:1575.20px;top:700.52px;font-size:11.20px;line-height:11.20px;color:#2e7d4f;">Table</span>
<span class="t" style="left:346.72px;top:723.27px;font-size:11.50px;line-height:11.50px;color:#3a3a3a;font-style:italic;">1936</span>
<span class="t" style="left:379.90px;top:722.52px;font-size:11.20px;line-height:11.20px;color:#3a3a3a;">BBWAA</span>
<span class="t" style="left:694.11px;top:723.27px;font-size:11.50px;line-height:11.50px;color:#3a3a3a;font-style:italic;">226</span>
<span class="t" style="left:864.91px;top:723.27px;font-size:11.50px;line-height:11.50px;color:#3a3a3a;font-style:italic;">170</span>
<span class="t" style="left:1042.11px;top:723.27px;font-size:11.50px;line-height:11.50px;color:#3a3a3a;font-style:italic;">12</span>
<span class="t" style="left:1062.70px;top:722.52px;font-size:11.20px;line-height:11.20px;color:#3a3a3a;">N</span>
<span class="t" style="left:1233.50px;top:722.52px;font-size:11.20px;line-height:11.20px;color:#3a3a3a;">Player</span>
<span class="t" style="left:1549.00px;top:723.27px;font-size:11.50px;line-height:11.50px;color:#3a3a3a;font-style:italic;">null</span>
<span class="t" style="left:1575.20px;top:722.52px;font-size:11.20px;line-height:11.20px;color:#2e7d4f;">Table</span>
<span class="t" style="left:346.72px;top:746.27px;font-size:11.50px;line-height:11.50px;color:#3a3a3a;font-style:italic;">1936</span>
<span class="t" style="left:379.90px;top:745.52px;font-size:11.20px;line-height:11.20px;color:#3a3a3a;">Veterans</span>
<span class="t" style="left:700.51px;top:746.27px;font-size:11.50px;line-height:11.50px;color:#3a3a3a;font-style:italic;">78</span>
<span class="t" style="left:871.31px;top:746.27px;font-size:11.50px;line-height:11.50px;color:#3a3a3a;font-style:italic;">59</span>
<span class="t" style="left:1042.96px;top:746.27px;font-size:11.50px;line-height:11.50px;color:#3a3a3a;font-style:italic;">11</span>
<span class="t" style="left:1062.70px;top:745.52px;font-size:11.20px;line-height:11.20px;color:#3a3a3a;">N</span>
<span class="t" style="left:1233.50px;top:745.52px;font-size:11.20px;line-height:11.20px;color:#3a3a3a;">Player</span>
<span class="t" style="left:1549.00px;top:746.27px;font-size:11.50px;line-height:11.50px;color:#3a3a3a;font-style:italic;">null</span>
<span class="t" style="left:1575.20px;top:745.52px;font-size:11.20px;line-height:11.20px;color:#2e7d4f;">Table</span>
<span class="t" style="left:346.72px;top:768.27px;font-size:11.50px;line-height:11.50px;color:#3a3a3a;font-style:italic;">1936</span>
<span class="t" style="left:379.90px;top:767.52px;font-size:11.20px;line-height:11.20px;color:#3a3a3a;">Veterans</span>
<span class="t" style="left:700.51px;top:768.27px;font-size:11.50px;line-height:11.50px;color:#3a3a3a;font-style:italic;">78</span>
<span class="t" style="left:871.31px;top:768.27px;font-size:11.50px;line-height:11.50px;color:#3a3a3a;font-style:italic;">59</span>
<span class="t" style="left:1042.96px;top:768.27px;font-size:11.50px;line-height:11.50px;color:#3a3a3a;font-style:italic;">11</span>
<span class="t" style="left:1062.70px;top:767.52px;font-size:11.20px;line-height:11.20px;color:#3a3a3a;">N</span>
<span class="t" style="left:1233.50px;top:767.52px;font-size:11.20px;line-height:11.20px;color:#3a3a3a;">Player</span>
<span class="t" style="left:1549.00px;top:768.27px;font-size:11.50px;line-height:11.50px;color:#3a3a3a;font-style:italic;">null</span>
<span class="t" style="left:1575.20px;top:767.52px;font-size:11.20px;line-height:11.20px;color:#2e7d4f;">Table</span>
<span class="t" style="left:346.72px;top:791.27px;font-size:11.50px;line-height:11.50px;color:#3a3a3a;font-style:italic;">1936</span>
<span class="t" style="left:379.90px;top:790.52px;font-size:11.20px;line-height:11.20px;color:#3a3a3a;">BBWAA</span>
<span class="t" style="left:694.11px;top:791.27px;font-size:11.50px;line-height:11.50px;color:#3a3a3a;font-style:italic;">226</span>
<span class="t" style="left:864.91px;top:791.27px;font-size:11.50px;line-height:11.50px;color:#3a3a3a;font-style:italic;">170</span>
<span class="t" style="left:1042.96px;top:791.27px;font-size:11.50px;line-height:11.50px;color:#3a3a3a;font-style:italic;">11</span>
<span class="t" style="left:1062.70px;top:790.52px;font-size:11.20px;line-height:11.20px;color:#3a3a3a;">N</span>
<span class="t" style="left:1233.50px;top:790.52px;font-size:11.20px;line-height:11.20px;color:#3a3a3a;">Player</span>
<span class="t" style="left:1549.00px;top:791.27px;font-size:11.50px;line-height:11.50px;color:#3a3a3a;font-style:italic;">null</span>
<span class="t" style="left:1575.20px;top:790.52px;font-size:11.20px;line-height:11.20px;color:#2e7d4f;">Table</span>
<span class="t" style="left:346.72px;top:813.27px;font-size:11.50px;line-height:11.50px;color:#3a3a3a;font-style:italic;">1936</span>
<span class="t" style="left:379.90px;top:812.52px;font-size:11.20px;line-height:11.20px;color:#3a3a3a;">BBWAA</span>
<span class="t" style="left:694.11px;top:813.27px;font-size:11.50px;line-height:11.50px;color:#3a3a3a;font-style:italic;">226</span>
<span class="t" style="left:864.91px;top:813.27px;font-size:11.50px;line-height:11.50px;color:#3a3a3a;font-style:italic;">170</span>
<span class="t" style="left:1042.11px;top:813.27px;font-size:11.50px;line-height:11.50px;color:#3a3a3a;font-style:italic;">10</span>
<span class="t" style="left:1062.70px;top:812.52px;font-size:11.20px;line-height:11.20px;color:#3a3a3a;">N</span>
<span class="t" style="left:1233.50px;top:812.52px;font-size:11.20px;line-height:11.20px;color:#3a3a3a;">Player</span>
<span class="t" style="left:1549.00px;top:813.27px;font-size:11.50px;line-height:11.50px;color:#3a3a3a;font-style:italic;">null</span>
<span class="t" style="left:1575.20px;top:812.52px;font-size:11.20px;line-height:11.20px;color:#2e7d4f;">Table</span>
<span class="t" style="left:346.72px;top:835.27px;font-size:11.50px;line-height:11.50px;color:#3a3a3a;font-style:italic;">1936</span>
<span class="t" style="left:379.90px;top:834.52px;font-size:11.20px;line-height:11.20px;color:#3a3a3a;">Veterans</span>
<span class="t" style="left:700.51px;top:835.27px;font-size:11.50px;line-height:11.50px;color:#3a3a3a;font-style:italic;">78</span>
<span class="t" style="left:871.31px;top:835.27px;font-size:11.50px;line-height:11.50px;color:#3a3a3a;font-style:italic;">59</span>
<span class="t" style="left:1048.50px;top:835.27px;font-size:11.50px;line-height:11.50px;color:#3a3a3a;font-style:italic;">9</span>
<span class="t" style="left:1062.70px;top:834.52px;font-size:11.20px;line-height:11.20px;color:#3a3a3a;">N</span>
<span class="t" style="left:1233.50px;top:834.52px;font-size:11.20px;line-height:11.20px;color:#3a3a3a;">Player</span>
<span class="t" style="left:1549.00px;top:835.27px;font-size:11.50px;line-height:11.50px;color:#3a3a3a;font-style:italic;">null</span>
<span class="t" style="left:1575.20px;top:834.52px;font-size:11.20px;line-height:11.20px;color:#2e7d4f;">Table</span>
<span class="t" style="left:346.72px;top:858.27px;font-size:11.50px;line-height:11.50px;color:#3a3a3a;font-style:italic;">1936</span>
<span class="t" style="left:379.90px;top:857.52px;font-size:11.20px;line-height:11.20px;color:#3a3a3a;">BBWAA</span>
<span class="t" style="left:694.11px;top:858.27px;font-size:11.50px;line-height:11.50px;color:#3a3a3a;font-style:italic;">226</span>
<span class="t" style="left:864.91px;top:858.27px;font-size:11.50px;line-height:11.50px;color:#3a3a3a;font-style:italic;">170</span>
<span class="t" style="left:1048.50px;top:858.27px;font-size:11.50px;line-height:11.50px;color:#3a3a3a;font-style:italic;">9</span>
<span class="t" style="left:1062.70px;top:857.52px;font-size:11.20px;line-height:11.20px;color:#3a3a3a;">N</span>
<span class="t" style="left:1233.50px;top:857.52px;font-size:11.20px;line-height:11.20px;color:#3a3a3a;">Player</span>
<span class="t" style="left:1549.00px;top:858.27px;font-size:11.50px;line-height:11.50px;color:#3a3a3a;font-style:italic;">null</span>
<span class="t" style="left:1575.20px;top:857.52px;font-size:11.20px;line-height:11.20px;color:#2e7d4f;">Table</span>
</div>
<div class="a" style="left:0;top:196px;width:230px;height:882px;overflow:hidden;">
<span class="t" style="left:208.74px;top:6.16px;font-size:12.80px;line-height:12.80px;color:#444;">1</span>
<span class="t" style="left:208.74px;top:28.16px;font-size:12.80px;line-height:12.80px;color:#444;">2</span>
<span class="t" style="left:208.74px;top:51.16px;font-size:12.80px;line-height:12.80px;color:#444;">3</span>
<span class="t" style="left:208.74px;top:73.16px;font-size:12.80px;line-height:12.80px;color:#444;">4</span>
<span class="t" style="left:208.74px;top:96.16px;font-size:12.80px;line-height:12.80px;color:#444;">5</span>
<span class="t" style="left:208.74px;top:118.16px;font-size:12.80px;line-height:12.80px;color:#444;">6</span>
<span class="t" style="left:208.74px;top:140.16px;font-size:12.80px;line-height:12.80px;color:#444;">7</span>
<span class="t" style="left:208.74px;top:163.16px;font-size:12.80px;line-height:12.80px;color:#444;">8</span>
<span class="t" style="left:208.74px;top:185.16px;font-size:12.80px;line-height:12.80px;color:#444;">9</span>
<span class="t" style="left:205.18px;top:208.16px;font-size:12.80px;line-height:12.80px;color:#444;">10</span>
<span class="t" style="left:205.66px;top:230.16px;font-size:12.80px;line-height:12.80px;color:#444;">11</span>
<span class="t" style="left:205.18px;top:252.16px;font-size:12.80px;line-height:12.80px;color:#444;">12</span>
<span class="t" style="left:205.18px;top:275.16px;font-size:12.80px;line-height:12.80px;color:#444;">13</span>
<span class="t" style="left:205.18px;top:297.16px;font-size:12.80px;line-height:12.80px;color:#444;">14</span>
<span class="t" style="left:205.18px;top:320.16px;font-size:12.80px;line-height:12.80px;color:#444;">15</span>
<span class="t" style="left:205.18px;top:342.16px;font-size:12.80px;line-height:12.80px;color:#444;">16</span>
<span class="t" style="left:205.18px;top:364.16px;font-size:12.80px;line-height:12.80px;color:#444;">17</span>
<span class="t" style="left:205.18px;top:387.16px;font-size:12.80px;line-height:12.80px;color:#444;">18</span>
<span class="t" style="left:205.18px;top:409.16px;font-size:12.80px;line-height:12.80px;color:#444;">19</span>
<span class="t" style="left:205.18px;top:432.16px;font-size:12.80px;line-height:12.80px;color:#444;">20</span>
<span class="t" style="left:205.18px;top:454.16px;font-size:12.80px;line-height:12.80px;color:#444;">21</span>
<span class="t" style="left:205.18px;top:477.16px;font-size:12.80px;line-height:12.80px;color:#444;">22</span>
<span class="t" style="left:205.18px;top:499.16px;font-size:12.80px;line-height:12.80px;color:#444;">23</span>
<span class="t" style="left:205.18px;top:521.16px;font-size:12.80px;line-height:12.80px;color:#444;">24</span>
<span class="t" style="left:205.18px;top:544.16px;font-size:12.80px;line-height:12.80px;color:#444;">25</span>
<span class="t" style="left:205.18px;top:566.16px;font-size:12.80px;line-height:12.80px;color:#444;">26</span>
<span class="t" style="left:205.18px;top:589.16px;font-size:12.80px;line-height:12.80px;color:#444;">27</span>
<span class="t" style="left:205.18px;top:611.16px;font-size:12.80px;line-height:12.80px;color:#444;">28</span>
<span class="t" style="left:205.18px;top:633.16px;font-size:12.80px;line-height:12.80px;color:#444;">29</span>
<span class="t" style="left:205.18px;top:656.16px;font-size:12.80px;line-height:12.80px;color:#444;">30</span>
<span class="t" style="left:205.18px;top:678.16px;font-size:12.80px;line-height:12.80px;color:#444;">31</span>
<span class="t" style="left:205.18px;top:701.16px;font-size:12.80px;line-height:12.80px;color:#444;">32</span>
<span class="t" style="left:205.18px;top:723.16px;font-size:12.80px;line-height:12.80px;color:#444;">33</span>
<span class="t" style="left:205.18px;top:745.16px;font-size:12.80px;line-height:12.80px;color:#444;">34</span>
<span class="t" style="left:205.18px;top:768.16px;font-size:12.80px;line-height:12.80px;color:#444;">35</span>
<span class="t" style="left:205.18px;top:790.16px;font-size:12.80px;line-height:12.80px;color:#444;">36</span>
<span class="t" style="left:205.18px;top:813.16px;font-size:12.80px;line-height:12.80px;color:#444;">37</span>
<span class="t" style="left:205.18px;top:835.16px;font-size:12.80px;line-height:12.80px;color:#444;">38</span>
<span class="t" style="left:205.18px;top:857.16px;font-size:12.80px;line-height:12.80px;color:#444;">39</span>
<span class="t" style="left:205.18px;top:880.16px;font-size:12.80px;line-height:12.80px;color:#444;">40</span>
</div>
<div class="a" style="left:1742.00px;top:196.00px;width:18.00px;height:882.00px;background:#f0f0f0;"></div>
<div class="a" style="left:1743.00px;top:232.00px;width:16.00px;height:610.00px;background:#cdcdcd;"></div>
<svg class="a" style="left:1744.50px;top:214.00px;" width="14" height="11" viewBox="0 0 14 11"><path d="M1 9.2 L6.5 3 L12 9.2" fill="none" stroke="#555" stroke-width="2.6"/></svg>
<svg class="a" style="left:1744.00px;top:1031.50px;" width="14" height="11" viewBox="0 0 14 11"><path d="M1 1.4 L6.5 7.6 L12 1.4" fill="none" stroke="#555" stroke-width="2.6"/></svg>
<div class="a" style="left:227.90px;top:1060.00px;width:1514.60px;height:18.00px;background:#f0f0f0;"></div>
<div class="a" style="left:428.30px;top:1061.00px;width:1276.90px;height:16.00px;background:#cdcdcd;"></div>
<svg class="a" style="left:245.50px;top:1062.00px;" width="11" height="14" viewBox="0 0 11 14"><path d="M9 1 L2.8 6.5 L9 12" fill="none" stroke="#555" stroke-width="2.6"/></svg>
<svg class="a" style="left:1713.50px;top:1062.00px;" width="11" height="14" viewBox="0 0 11 14"><path d="M2 1 L8.2 6.5 L2 12" fill="none" stroke="#555" stroke-width="2.6"/></svg>
<div class="a" style="left:1764.00px;top:152.00px;width:1.00px;height:925.00px;background:#d9d9d9;"></div>
<div class="a" style="left:1366.00px;top:188.00px;width:372.50px;height:525.00px;background:#ffffff;border:1px solid #c4c4c4;box-sizing:border-box;box-shadow:1px 2px 3px rgba(0,0,0,0.18);"></div>
<div class="a" style="left:1399.50px;top:196.00px;width:287.60px;height:22.60px;background:#ffffff;border:1px solid #9c9c9c;box-sizing:border-box;"></div>
<span class="t" style="left:1406.00px;top:202.84px;font-size:12.00px;line-height:12.00px;color:#707070;font-style:italic;transform:scaleX(1.0042);transform-origin:left center;">Search Columns to Expand</span>
<div class="a" style="left:1693.00px;top:196.00px;width:22.80px;height:23.00px;background:#ececec;border:1px solid #adadad;box-sizing:border-box;"></div>
<svg class="a" style="left:1695.00px;top:198.00px;" width="19" height="19" viewBox="0 0 19 19"><path d="M2.8 9 L6 1.5 L9.2 9 M4 6.4 H8" fill="none" stroke="#4a86c8" stroke-width="1.15"/><path d="M3 10.5 H8.8 L3 17 H9" fill="none" stroke="#a35dc9" stroke-width="1.15"/><path d="M14.5 2 V17 M11.8 14 L14.5 17 L17.2 14" fill="none" stroke="#555" stroke-width="1.05"/></svg>
<svg class="a" style="left:1399.00px;top:229.00px;" width="14" height="14" viewBox="0 0 14 14"><circle cx="6.7" cy="6.7" r="5.1" fill="#fff" stroke="#7c7c7c" stroke-width="1.4"/><circle cx="6.7" cy="6.7" r="2.3" fill="#5e5e5e"/></svg>
<span class="t" style="left:1415.90px;top:230.84px;font-size:12.00px;line-height:12.00px;color:#333;transform:scaleX(0.9877);transform-origin:left center;">Expand</span>
<svg class="a" style="left:1467.00px;top:229.00px;" width="14" height="14" viewBox="0 0 14 14"><circle cx="6.6" cy="6.7" r="5.1" fill="#fff" stroke="#7c7c7c" stroke-width="1.4"/></svg>
<span class="t" style="left:1483.80px;top:230.84px;font-size:12.00px;line-height:12.00px;color:#333;transform:scaleX(1.0654);transform-origin:left center;">Aggregate</span>
<div class="a" style="left:1399.50px;top:253.40px;width:316.20px;height:375.30px;background:#ffffff;border:1px solid #dcdcdc;box-sizing:border-box;"></div>
<div class="a" style="left:1400.5px;top:254.4px;width:296px;height:373px;overflow:hidden;">
<svg class="a" style="left:10.50px;top:-6.34px;" width="13" height="13" viewBox="0 0 13 13"><rect x="0.5" y="0.5" width="12" height="12" fill="#fff" stroke="#9a9a9a" stroke-width="1"/></svg>
<span class="t" style="left:31.40px;top:-4.67px;font-size:12.60px;line-height:12.60px;color:#404040;transform:scaleX(0.9905);transform-origin:left center;">birthCity</span>
<svg class="a" style="left:10.50px;top:15.00px;" width="13" height="13" viewBox="0 0 13 13"><rect x="0.5" y="0.5" width="12" height="12" fill="#fff" stroke="#9a9a9a" stroke-width="1"/></svg>
<span class="t" style="left:31.40px;top:17.33px;font-size:12.60px;line-height:12.60px;color:#404040;transform:scaleX(0.9905);transform-origin:left center;">deathYear</span>
<svg class="a" style="left:10.50px;top:36.34px;" width="13" height="13" viewBox="0 0 13 13"><rect x="0.5" y="0.5" width="12" height="12" fill="#fff" stroke="#9a9a9a" stroke-width="1"/></svg>
<span class="t" style="left:31.40px;top:38.33px;font-size:12.60px;line-height:12.60px;color:#404040;transform:scaleX(0.9905);transform-origin:left center;">deathMonth</span>
<svg class="a" style="left:10.50px;top:57.68px;" width="13" height="13" viewBox="0 0 13 13"><rect x="0.5" y="0.5" width="12" height="12" fill="#fff" stroke="#9a9a9a" stroke-width="1"/></svg>
<span class="t" style="left:31.40px;top:59.33px;font-size:12.60px;line-height:12.60px;color:#404040;transform:scaleX(0.9905);transform-origin:left center;">deathDay</span>
<svg class="a" style="left:10.50px;top:79.02px;" width="13" height="13" viewBox="0 0 13 13"><rect x="0.5" y="0.5" width="12" height="12" fill="#fff" stroke="#9a9a9a" stroke-width="1"/></svg>
<span class="t" style="left:31.40px;top:81.33px;font-size:12.60px;line-height:12.60px;color:#404040;transform:scaleX(0.9905);transform-origin:left center;">deathCountry</span>
<svg class="a" style="left:10.50px;top:100.36px;" width="13" height="13" viewBox="0 0 13 13"><rect x="0.5" y="0.5" width="12" height="12" fill="#fff" stroke="#9a9a9a" stroke-width="1"/></svg>
<span class="t" style="left:31.40px;top:102.33px;font-size:12.60px;line-height:12.60px;color:#404040;transform:scaleX(0.9905);transform-origin:left center;">deathState</span>
<svg class="a" style="left:10.50px;top:121.70px;" width="13" height="13" viewBox="0 0 13 13"><rect x="0.5" y="0.5" width="12" height="12" fill="#fff" stroke="#9a9a9a" stroke-width="1"/></svg>
<span class="t" style="left:31.40px;top:123.33px;font-size:12.60px;line-height:12.60px;color:#404040;transform:scaleX(0.9905);transform-origin:left center;">deathCity</span>
<svg class="a" style="left:10.50px;top:143.04px;" width="13" height="13" viewBox="0 0 13 13"><rect x="0.5" y="0.5" width="12" height="12" fill="#fff" stroke="#9a9a9a" stroke-width="1"/><path d="M2.4 6.2 L5.2 9.2 L10.4 2.8" fill="none" stroke="#606060" stroke-width="1.5"/></svg>
<span class="t" style="left:31.40px;top:145.33px;font-size:12.60px;line-height:12.60px;color:#404040;transform:scaleX(0.9905);transform-origin:left center;">nameFirst</span>
<svg class="a" style="left:10.50px;top:164.38px;" width="13" height="13" viewBox="0 0 13 13"><rect x="0.5" y="0.5" width="12" height="12" fill="#fff" stroke="#9a9a9a" stroke-width="1"/><path d="M2.4 6.2 L5.2 9.2 L10.4 2.8" fill="none" stroke="#606060" stroke-width="1.5"/></svg>
<span class="t" style="left:31.40px;top:166.33px;font-size:12.60px;line-height:12.60px;color:#404040;transform:scaleX(0.9905);transform-origin:left center;">nameLast</span>
<svg class="a" style="left:10.50px;top:185.72px;" width="13" height="13" viewBox="0 0 13 13"><rect x="0.5" y="0.5" width="12" height="12" fill="#fff" stroke="#9a9a9a" stroke-width="1"/></svg>
<span class="t" style="left:31.40px;top:187.33px;font-size:12.60px;line-height:12.60px;color:#404040;transform:scaleX(0.9905);transform-origin:left center;">nameGiven</span>
<svg class="a" style="left:10.50px;top:207.06px;" width="13" height="13" viewBox="0 0 13 13"><rect x="0.5" y="0.5" width="12" height="12" fill="#fff" stroke="#9a9a9a" stroke-width="1"/></svg>
<span class="t" style="left:31.40px;top:209.33px;font-size:12.60px;line-height:12.60px;color:#404040;transform:scaleX(0.9905);transform-origin:left center;">weight</span>
<svg class="a" style="left:10.50px;top:228.40px;" width="13" height="13" viewBox="0 0 13 13"><rect x="0.5" y="0.5" width="12" height="12" fill="#fff" stroke="#9a9a9a" stroke-width="1"/></svg>
<span class="t" style="left:31.40px;top:230.33px;font-size:12.60px;line-height:12.60px;color:#404040;transform:scaleX(0.9905);transform-origin:left center;">height</span>
<svg class="a" style="left:10.50px;top:249.74px;" width="13" height="13" viewBox="0 0 13 13"><rect x="0.5" y="0.5" width="12" height="12" fill="#fff" stroke="#9a9a9a" stroke-width="1"/></svg>
<span class="t" style="left:31.40px;top:251.33px;font-size:12.60px;line-height:12.60px;color:#404040;transform:scaleX(0.9905);transform-origin:left center;">bats</span>
<svg class="a" style="left:10.50px;top:271.08px;" width="13" height="13" viewBox="0 0 13 13"><rect x="0.5" y="0.5" width="12" height="12" fill="#fff" stroke="#9a9a9a" stroke-width="1"/></svg>
<span class="t" style="left:31.40px;top:273.33px;font-size:12.60px;line-height:12.60px;color:#404040;transform:scaleX(0.9905);transform-origin:left center;">throws</span>
<svg class="a" style="left:10.50px;top:292.42px;" width="13" height="13" viewBox="0 0 13 13"><rect x="0.5" y="0.5" width="12" height="12" fill="#fff" stroke="#9a9a9a" stroke-width="1"/></svg>
<span class="t" style="left:31.40px;top:294.33px;font-size:12.60px;line-height:12.60px;color:#404040;transform:scaleX(0.9905);transform-origin:left center;">debut</span>
<svg class="a" style="left:10.50px;top:313.76px;" width="13" height="13" viewBox="0 0 13 13"><rect x="0.5" y="0.5" width="12" height="12" fill="#fff" stroke="#9a9a9a" stroke-width="1"/></svg>
<span class="t" style="left:31.40px;top:315.33px;font-size:12.60px;line-height:12.60px;color:#404040;transform:scaleX(0.9905);transform-origin:left center;">finalGame</span>
<svg class="a" style="left:10.50px;top:335.10px;" width="13" height="13" viewBox="0 0 13 13"><rect x="0.5" y="0.5" width="12" height="12" fill="#fff" stroke="#9a9a9a" stroke-width="1"/></svg>
<span class="t" style="left:31.40px;top:337.33px;font-size:12.60px;line-height:12.60px;color:#404040;transform:scaleX(0.9905);transform-origin:left center;">retroID</span>
<svg class="a" style="left:10.50px;top:356.44px;" width="13" height="13" viewBox="0 0 13 13"><rect x="0.5" y="0.5" width="12" height="12" fill="#fff" stroke="#9a9a9a" stroke-width="1"/></svg>
<span class="t" style="left:31.40px;top:358.33px;font-size:12.60px;line-height:12.60px;color:#404040;transform:scaleX(0.9905);transform-origin:left center;">bbrefID</span>
</div>
<div class="a" style="left:1697.20px;top:254.40px;width:17.80px;height:373.30px;background:#f0f0f0;"></div>
<div class="a" style="left:1698.00px;top:381.00px;width:16.00px;height:210.00px;background:#cdcdcd;"></div>
<svg class="a" style="left:1699.40px;top:272.50px;" width="14" height="11" viewBox="0 0 14 11"><path d="M1 9 L6.5 3 L12 9" fill="none" stroke="#555" stroke-width="2.6"/></svg>
<svg class="a" style="left:1699.00px;top:599.30px;" width="14" height="11" viewBox="0 0 14 11"><path d="M1 1.6 L6.5 7.6 L12 1.6" fill="none" stroke="#555" stroke-width="2.6"/></svg>
<svg class="a" style="left:1399.50px;top:641.00px;" width="13" height="13" viewBox="0 0 13 13"><rect x="0.5" y="0.5" width="11.5" height="11.5" fill="#fff" stroke="#8a8a8a"/><path d="M2.4 6.2 L5 8.8 L10 2.6" fill="none" stroke="#606060" stroke-width="1.5"/></svg>
<span class="t" style="left:1417.70px;top:641.84px;font-size:12.00px;line-height:12.00px;color:#333;transform:scaleX(1.0564);transform-origin:left center;">Use original column name as prefix</span>
<div class="a" style="left:1578.00px;top:679.50px;width:63.30px;height:22.80px;background:#e1e1e1;border:1px solid #0a78d4;box-sizing:border-box;"></div>
<span class="t" style="left:1601.53px;top:686.77px;font-size:10.90px;line-height:10.90px;color:#333;transform:scaleX(0.9080);transform-origin:center center;">OK</span>
<div class="a" style="left:1652.10px;top:679.50px;width:63.60px;height:22.80px;background:#e1e1e1;border:1px solid #adadad;box-sizing:border-box;"></div>
<span class="t" style="left:1666.83px;top:686.77px;font-size:10.90px;line-height:10.90px;color:#333;transform:scaleX(0.9519);transform-origin:center center;">Cancel</span>
<span class="t" style="left:1780.80px;top:174.72px;font-size:21.60px;line-height:21.60px;color:#4f9a7e;transform:scaleX(0.9099);transform-origin:left center;">Query Settings</span>
<svg class="a" style="left:2007.50px;top:179.00px;" width="13" height="13" viewBox="0 0 13 13"><path d="M1 1 L12 12 M12 1 L1 12" stroke="#555" stroke-width="1"/></svg>
<svg class="a" style="left:1775.00px;top:219.40px;" width="9" height="9" viewBox="0 0 9 9"><path d="M8.5 0.8 V8.5 H0.8 Z" fill="#444"/></svg>
<span class="t" style="left:1790.20px;top:221.27px;font-size:11.50px;line-height:11.50px;color:#217346;font-weight:700;transform:scaleX(0.9983);transform-origin:left center;">PROPERTIES</span>
<span class="t" style="left:1790.20px;top:240.84px;font-size:12.00px;line-height:12.00px;color:#333;transform:scaleX(1.0309);transform-origin:left center;">Name</span>
<div class="a" style="left:1790.20px;top:256.80px;width:231.70px;height:22.70px;background:#ffffff;border:1px solid #ababab;box-sizing:border-box;"></div>
<span class="t" style="left:1796.80px;top:263.10px;font-size:11.70px;line-height:11.70px;color:#333;transform:scaleX(0.9968);transform-origin:left center;">left_join</span>
<span class="t" style="left:1790.20px;top:291.42px;font-size:12.50px;line-height:12.50px;color:#3c6eb4;transform:scaleX(1.0035);transform-origin:left center;">All Properties</span>
<svg class="a" style="left:1775.00px;top:327.60px;" width="9" height="9" viewBox="0 0 9 9"><path d="M8.5 0.8 V8.5 H0.8 Z" fill="#444"/></svg>
<span class="t" style="left:1790.20px;top:328.27px;font-size:11.50px;line-height:11.50px;color:#217346;font-weight:700;transform:scaleX(1.0006);transform-origin:left center;">APPLIED STEPS</span>
<div class="a" style="left:1790.20px;top:347.50px;width:231.70px;height:708.20px;background:#ffffff;border:1px solid #c6c6c6;box-sizing:border-box;"></div>
<div class="a" style="left:1791.20px;top:348.50px;width:229.70px;height:20.80px;background:#d3eddf;"></div>
<span class="t" style="left:1812.70px;top:353.84px;font-size:12.00px;line-height:12.00px;color:#333;transform:scaleX(0.9994);transform-origin:left center;">Source</span>
<svg class="a" style="left:2000.20px;top:352.50px;" width="14" height="14" viewBox="0 0 14 14"><rect x="-1.2" y="-6" width="2.4" height="3" transform="translate(7 7) rotate(0)" fill="#9a9a9a"/><rect x="-1.2" y="-6" width="2.4" height="3" transform="translate(7 7) rotate(45)" fill="#9a9a9a"/><rect x="-1.2" y="-6" width="2.4" height="3" transform="translate(7 7) rotate(90)" fill="#9a9a9a"/><rect x="-1.2" y="-6" width="2.4" height="3" transform="translate(7 7) rotate(135)" fill="#9a9a9a"/><rect x="-1.2" y="-6" width="2.4" height="3" transform="translate(7 7) rotate(180)" fill="#9a9a9a"/><rect x="-1.2" y="-6" width="2.4" height="3" transform="translate(7 7) rotate(225)" fill="#9a9a9a"/><rect x="-1.2" y="-6" width="2.4" height="3" transform="translate(7 7) rotate(270)" fill="#9a9a9a"/><rect x="-1.2" y="-6" width="2.4" height="3" transform="translate(7 7) rotate(315)" fill="#9a9a9a"/><circle cx="7" cy="7" r="4" fill="#9a9a9a"/><circle cx="7" cy="7" r="1.8" fill="#d3eddf"/></svg>
<div class="a" style="left:0.00px;top:1078.00px;width:2048.00px;height:23.00px;background:#217346;"></div>
<span class="t" style="left:6.30px;top:1084.18px;font-size:11.60px;line-height:11.60px;color:#ffffff;transform:scaleX(0.9567);transform-origin:left center;">10 COLUMNS, 999+ ROWS</span>
<span class="t" style="left:162.30px;top:1084.18px;font-size:11.60px;line-height:11.60px;color:#ffffff;transform:scaleX(1.0243);transform-origin:left center;">Column profiling based on top 1000 rows</span>
<span class="t" style="left:1838.63px;top:1084.18px;font-size:11.60px;line-height:11.60px;color:#ffffff;transform:scaleX(0.9559);transform-origin:right center;">PREVIEW DOWNLOADED AT 9:42 AM</span>
</body></html>
